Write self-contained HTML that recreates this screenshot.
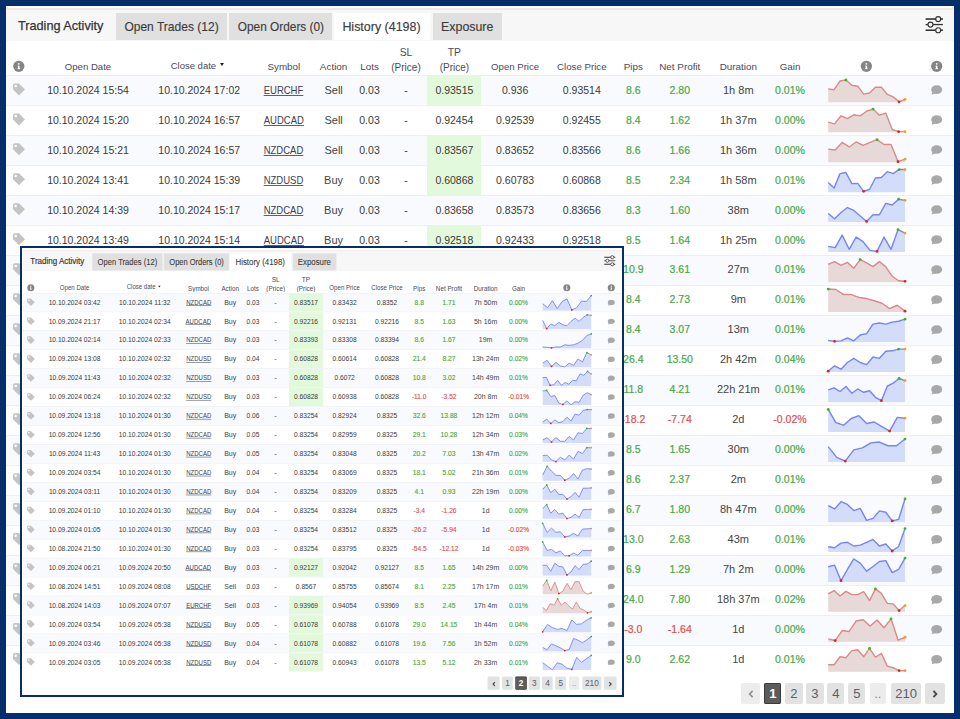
<!DOCTYPE html>
<html><head><meta charset="utf-8"><style>
*{margin:0;padding:0}
body{width:960px;height:719px;background:#052e6b;position:relative;overflow:hidden;font-family:"Liberation Sans",sans-serif}
.ui{position:absolute;left:0;top:0;width:948px;height:707px;background:#fff;overflow:hidden}
.ui div{position:absolute;white-space:nowrap}
.d{width:140px;text-align:center;font-size:10.5px;color:#3a3a3a}
.lt{font-size:11px;color:#444}
.sym{font-size:10.8px;color:#40404f}
.su{display:inline-block;transform:scaleX(0.88);text-decoration:underline;text-decoration-color:#60606c;text-underline-offset:1.2px}
.hd{width:140px;text-align:center;font-size:9.5px;color:#4a4a5c}
.tri{display:inline-block;width:0;height:0;border-left:2.6px solid transparent;border-right:2.6px solid transparent;border-top:3.6px solid #222;margin-left:4px;vertical-align:2.5px}
.tabt{height:28px;line-height:28px}
.tab{top:6.7px;height:27.8px;line-height:27.8px;text-align:center;font-size:12.9px;color:#3c3c3c;-webkit-text-stroke:0.15px #3c3c3c}
.pg{top:676.6px;height:21px;line-height:21px;text-align:center;font-size:13px;color:#56606c;background:#e2e2e2;border-radius:2px}
.pg.dis{background:#ececec;color:#8a9099}
.pg.act{background:#5c5c5c;color:#fff;box-shadow:inset 0 0 0 1px #3a3a3a;font-weight:bold}
</style></head><body>
<div class="ui" style="left:6px;top:6px">
<div style="position:absolute;left:0;top:2px;width:948px;height:1.5px;background:#ebebeb"></div>
<div style="position:absolute;left:0;top:3.5px;width:948px;height:31.5px;background:#f7f7f7"></div>
<div class="tabt" style="left:12.3px;top:6.2px;font-size:12.9px;-webkit-text-stroke:0.25px #333;color:#333;transform:scaleX(0.983);transform-origin:0 0">Trading Activity</div>
<div class="tab" style="left:109.8px;width:111px;background:#e0e0e0"><span style="display:inline-block;transform:scaleX(0.933)">Open Trades (12)</span></div>
<div class="tab" style="left:223.3px;width:103.2px;background:#e0e0e0"><span style="display:inline-block;transform:scaleX(0.919)">Open Orders (0)</span></div>
<div class="tab" style="left:327.8px;width:96.2px;background:#ffffff"><span style="display:inline-block;transform:scaleX(0.966)">History (4198)</span></div>
<div class="tab" style="left:426.5px;width:69.3px;background:#e0e0e0"><span style="display:inline-block;transform:scaleX(0.96)">Exposure</span></div>
<svg style="position:absolute;left:0;top:0" width="948" height="40"><g stroke="#333" fill="none">
<line x1="919.6" y1="13.04" x2="936.9" y2="13.04" stroke-width="1.6"/>
<line x1="919.6" y1="18.56" x2="936.9" y2="18.56" stroke-width="1.3"/>
<line x1="919.6" y1="24.23" x2="936.9" y2="24.23" stroke-width="1.6"/>
<circle cx="932.2" cy="13.04" r="2.5" fill="#f7f7f7" stroke-width="1.2"/>
<circle cx="924.5" cy="18.56" r="2.5" fill="#f7f7f7" stroke-width="1.2"/>
<circle cx="932.2" cy="24.23" r="2.5" fill="#f7f7f7" stroke-width="1.2"/></g></svg>
<div style="left:0;top:0px;width:948px;height:707px">
<div class="hd" style="left:12px;top:53.2px;height:16px;line-height:16px;font-size:9.6px;">Open Date</div>
<div class="hd" style="left:207.8px;top:53.2px;height:16px;line-height:16px;font-size:9.84px;">Symbol</div>
<div class="hd" style="left:257.6px;top:53.2px;height:16px;line-height:16px;font-size:9.9px;">Action</div>
<div class="hd" style="left:293.5px;top:53.2px;height:16px;line-height:16px;font-size:9.9px;">Lots</div>
<div class="hd" style="left:439.1px;top:53.2px;height:16px;line-height:16px;font-size:9.6px;">Open Price</div>
<div class="hd" style="left:505.8px;top:53.2px;height:16px;line-height:16px;font-size:9.7px;">Close Price</div>
<div class="hd" style="left:557.3px;top:53.2px;height:16px;line-height:16px;font-size:9.9px;">Pips</div>
<div class="hd" style="left:603.8px;top:53.2px;height:16px;line-height:16px;font-size:9.9px;">Net Profit</div>
<div class="hd" style="left:662.3px;top:53.2px;height:16px;line-height:16px;font-size:9.9px;">Duration</div>
<div class="hd" style="left:714px;top:53.2px;height:16px;line-height:16px;font-size:9.8px;">Gain</div>
<div class="hd" style="left:121.4px;top:51.5px;height:16px;line-height:16px;font-size:9.5px;">Close date<span class="tri"></span></div>
<div class="hd" style="left:330px;top:39.3px;height:16px;line-height:16px;font-size:10.3px;">SL</div>
<div class="hd" style="left:330px;top:53.9px;height:16px;line-height:16px;font-size:10px;">(Price)</div>
<div class="hd" style="left:378.4px;top:39.3px;height:16px;line-height:16px;font-size:10.3px;">TP</div>
<div class="hd" style="left:378.4px;top:53.9px;height:16px;line-height:16px;font-size:10px;">(Price)</div>
<div style="position:absolute;left:0;top:69px;width:948px;height:29.98px;background:#f9fafd;border-top:1px solid #edf0f3;box-sizing:border-box"></div>
<div style="position:absolute;left:421px;width:54px;top:69.8px;height:29.18px;background:#e3f9db"></div>
<div class="d" style="left:12px;top:69.6px;height:28.98px;line-height:28.98px;font-size:10.5px;">10.10.2024 15:54</div>
<div class="d" style="left:123.2px;top:69.6px;height:28.98px;line-height:28.98px;font-size:10.5px;">10.10.2024 17:02</div>
<div class="d sym" style="left:207.8px;top:69.6px;height:28.98px;line-height:28.98px;font-size:10.8px;"><span class="su">EURCHF</span></div>
<div class="d lt" style="left:257.6px;top:69.6px;height:28.98px;line-height:28.98px;font-size:11px;">Sell</div>
<div class="d" style="left:293.5px;top:69.6px;height:28.98px;line-height:28.98px;font-size:10.5px;">0.03</div>
<div class="d" style="left:330px;top:69.6px;height:28.98px;line-height:28.98px;font-size:10.5px;">-</div>
<div class="d" style="left:378.4px;top:69.6px;height:28.98px;line-height:28.98px;font-size:10.5px;">0.93515</div>
<div class="d" style="left:439.1px;top:69.6px;height:28.98px;line-height:28.98px;font-size:10.5px;">0.936</div>
<div class="d" style="left:505.8px;top:69.6px;height:28.98px;line-height:28.98px;font-size:10.5px;">0.93514</div>
<div class="d" style="left:557.3px;top:69.6px;height:28.98px;line-height:28.98px;font-size:10.5px;color:#47a947;-webkit-text-stroke:0.2px #47a947">8.6</div>
<div class="d" style="left:603.8px;top:69.6px;height:28.98px;line-height:28.98px;font-size:10.5px;color:#47a947;-webkit-text-stroke:0.2px #47a947">2.80</div>
<div class="d lt" style="left:662.3px;top:69.6px;height:28.98px;line-height:28.98px;font-size:11px;">1h 8m</div>
<div class="d" style="left:714px;top:69.6px;height:28.98px;line-height:28.98px;font-size:10.5px;color:#47a947;-webkit-text-stroke:0.2px #47a947">0.01%</div>
<div style="position:absolute;left:0;top:98.98px;width:948px;height:29.98px;background:#ffffff;border-top:1px solid #edf0f3;box-sizing:border-box"></div>
<div class="d" style="left:12px;top:99.58px;height:28.98px;line-height:28.98px;font-size:10.5px;">10.10.2024 15:20</div>
<div class="d" style="left:123.2px;top:99.58px;height:28.98px;line-height:28.98px;font-size:10.5px;">10.10.2024 16:57</div>
<div class="d sym" style="left:207.8px;top:99.58px;height:28.98px;line-height:28.98px;font-size:10.8px;"><span class="su">AUDCAD</span></div>
<div class="d lt" style="left:257.6px;top:99.58px;height:28.98px;line-height:28.98px;font-size:11px;">Sell</div>
<div class="d" style="left:293.5px;top:99.58px;height:28.98px;line-height:28.98px;font-size:10.5px;">0.03</div>
<div class="d" style="left:330px;top:99.58px;height:28.98px;line-height:28.98px;font-size:10.5px;">-</div>
<div class="d" style="left:378.4px;top:99.58px;height:28.98px;line-height:28.98px;font-size:10.5px;">0.92454</div>
<div class="d" style="left:439.1px;top:99.58px;height:28.98px;line-height:28.98px;font-size:10.5px;">0.92539</div>
<div class="d" style="left:505.8px;top:99.58px;height:28.98px;line-height:28.98px;font-size:10.5px;">0.92455</div>
<div class="d" style="left:557.3px;top:99.58px;height:28.98px;line-height:28.98px;font-size:10.5px;color:#47a947;-webkit-text-stroke:0.2px #47a947">8.4</div>
<div class="d" style="left:603.8px;top:99.58px;height:28.98px;line-height:28.98px;font-size:10.5px;color:#47a947;-webkit-text-stroke:0.2px #47a947">1.62</div>
<div class="d lt" style="left:662.3px;top:99.58px;height:28.98px;line-height:28.98px;font-size:11px;">1h 37m</div>
<div class="d" style="left:714px;top:99.58px;height:28.98px;line-height:28.98px;font-size:10.5px;color:#47a947;-webkit-text-stroke:0.2px #47a947">0.00%</div>
<div style="position:absolute;left:0;top:128.96px;width:948px;height:29.98px;background:#f9fafd;border-top:1px solid #edf0f3;box-sizing:border-box"></div>
<div style="position:absolute;left:421px;width:54px;top:129.76px;height:29.18px;background:#e3f9db"></div>
<div class="d" style="left:12px;top:129.56px;height:28.98px;line-height:28.98px;font-size:10.5px;">10.10.2024 15:21</div>
<div class="d" style="left:123.2px;top:129.56px;height:28.98px;line-height:28.98px;font-size:10.5px;">10.10.2024 16:57</div>
<div class="d sym" style="left:207.8px;top:129.56px;height:28.98px;line-height:28.98px;font-size:10.8px;"><span class="su">NZDCAD</span></div>
<div class="d lt" style="left:257.6px;top:129.56px;height:28.98px;line-height:28.98px;font-size:11px;">Sell</div>
<div class="d" style="left:293.5px;top:129.56px;height:28.98px;line-height:28.98px;font-size:10.5px;">0.03</div>
<div class="d" style="left:330px;top:129.56px;height:28.98px;line-height:28.98px;font-size:10.5px;">-</div>
<div class="d" style="left:378.4px;top:129.56px;height:28.98px;line-height:28.98px;font-size:10.5px;">0.83567</div>
<div class="d" style="left:439.1px;top:129.56px;height:28.98px;line-height:28.98px;font-size:10.5px;">0.83652</div>
<div class="d" style="left:505.8px;top:129.56px;height:28.98px;line-height:28.98px;font-size:10.5px;">0.83566</div>
<div class="d" style="left:557.3px;top:129.56px;height:28.98px;line-height:28.98px;font-size:10.5px;color:#47a947;-webkit-text-stroke:0.2px #47a947">8.6</div>
<div class="d" style="left:603.8px;top:129.56px;height:28.98px;line-height:28.98px;font-size:10.5px;color:#47a947;-webkit-text-stroke:0.2px #47a947">1.66</div>
<div class="d lt" style="left:662.3px;top:129.56px;height:28.98px;line-height:28.98px;font-size:11px;">1h 36m</div>
<div class="d" style="left:714px;top:129.56px;height:28.98px;line-height:28.98px;font-size:10.5px;color:#47a947;-webkit-text-stroke:0.2px #47a947">0.00%</div>
<div style="position:absolute;left:0;top:158.94px;width:948px;height:29.98px;background:#ffffff;border-top:1px solid #edf0f3;box-sizing:border-box"></div>
<div style="position:absolute;left:421px;width:54px;top:159.74px;height:29.18px;background:#e3f9db"></div>
<div class="d" style="left:12px;top:159.54px;height:28.98px;line-height:28.98px;font-size:10.5px;">10.10.2024 13:41</div>
<div class="d" style="left:123.2px;top:159.54px;height:28.98px;line-height:28.98px;font-size:10.5px;">10.10.2024 15:39</div>
<div class="d sym" style="left:207.8px;top:159.54px;height:28.98px;line-height:28.98px;font-size:10.8px;"><span class="su">NZDUSD</span></div>
<div class="d lt" style="left:257.6px;top:159.54px;height:28.98px;line-height:28.98px;font-size:11px;">Buy</div>
<div class="d" style="left:293.5px;top:159.54px;height:28.98px;line-height:28.98px;font-size:10.5px;">0.03</div>
<div class="d" style="left:330px;top:159.54px;height:28.98px;line-height:28.98px;font-size:10.5px;">-</div>
<div class="d" style="left:378.4px;top:159.54px;height:28.98px;line-height:28.98px;font-size:10.5px;">0.60868</div>
<div class="d" style="left:439.1px;top:159.54px;height:28.98px;line-height:28.98px;font-size:10.5px;">0.60783</div>
<div class="d" style="left:505.8px;top:159.54px;height:28.98px;line-height:28.98px;font-size:10.5px;">0.60868</div>
<div class="d" style="left:557.3px;top:159.54px;height:28.98px;line-height:28.98px;font-size:10.5px;color:#47a947;-webkit-text-stroke:0.2px #47a947">8.5</div>
<div class="d" style="left:603.8px;top:159.54px;height:28.98px;line-height:28.98px;font-size:10.5px;color:#47a947;-webkit-text-stroke:0.2px #47a947">2.34</div>
<div class="d lt" style="left:662.3px;top:159.54px;height:28.98px;line-height:28.98px;font-size:11px;">1h 58m</div>
<div class="d" style="left:714px;top:159.54px;height:28.98px;line-height:28.98px;font-size:10.5px;color:#47a947;-webkit-text-stroke:0.2px #47a947">0.01%</div>
<div style="position:absolute;left:0;top:188.92px;width:948px;height:29.98px;background:#f9fafd;border-top:1px solid #edf0f3;box-sizing:border-box"></div>
<div class="d" style="left:12px;top:189.52px;height:28.98px;line-height:28.98px;font-size:10.5px;">10.10.2024 14:39</div>
<div class="d" style="left:123.2px;top:189.52px;height:28.98px;line-height:28.98px;font-size:10.5px;">10.10.2024 15:17</div>
<div class="d sym" style="left:207.8px;top:189.52px;height:28.98px;line-height:28.98px;font-size:10.8px;"><span class="su">NZDCAD</span></div>
<div class="d lt" style="left:257.6px;top:189.52px;height:28.98px;line-height:28.98px;font-size:11px;">Buy</div>
<div class="d" style="left:293.5px;top:189.52px;height:28.98px;line-height:28.98px;font-size:10.5px;">0.03</div>
<div class="d" style="left:330px;top:189.52px;height:28.98px;line-height:28.98px;font-size:10.5px;">-</div>
<div class="d" style="left:378.4px;top:189.52px;height:28.98px;line-height:28.98px;font-size:10.5px;">0.83658</div>
<div class="d" style="left:439.1px;top:189.52px;height:28.98px;line-height:28.98px;font-size:10.5px;">0.83573</div>
<div class="d" style="left:505.8px;top:189.52px;height:28.98px;line-height:28.98px;font-size:10.5px;">0.83656</div>
<div class="d" style="left:557.3px;top:189.52px;height:28.98px;line-height:28.98px;font-size:10.5px;color:#47a947;-webkit-text-stroke:0.2px #47a947">8.3</div>
<div class="d" style="left:603.8px;top:189.52px;height:28.98px;line-height:28.98px;font-size:10.5px;color:#47a947;-webkit-text-stroke:0.2px #47a947">1.60</div>
<div class="d lt" style="left:662.3px;top:189.52px;height:28.98px;line-height:28.98px;font-size:11px;">38m</div>
<div class="d" style="left:714px;top:189.52px;height:28.98px;line-height:28.98px;font-size:10.5px;color:#47a947;-webkit-text-stroke:0.2px #47a947">0.00%</div>
<div style="position:absolute;left:0;top:218.9px;width:948px;height:29.98px;background:#ffffff;border-top:1px solid #edf0f3;box-sizing:border-box"></div>
<div style="position:absolute;left:421px;width:54px;top:219.7px;height:29.18px;background:#e3f9db"></div>
<div class="d" style="left:12px;top:219.5px;height:28.98px;line-height:28.98px;font-size:10.5px;">10.10.2024 13:49</div>
<div class="d" style="left:123.2px;top:219.5px;height:28.98px;line-height:28.98px;font-size:10.5px;">10.10.2024 15:14</div>
<div class="d sym" style="left:207.8px;top:219.5px;height:28.98px;line-height:28.98px;font-size:10.8px;"><span class="su">AUDCAD</span></div>
<div class="d lt" style="left:257.6px;top:219.5px;height:28.98px;line-height:28.98px;font-size:11px;">Buy</div>
<div class="d" style="left:293.5px;top:219.5px;height:28.98px;line-height:28.98px;font-size:10.5px;">0.03</div>
<div class="d" style="left:330px;top:219.5px;height:28.98px;line-height:28.98px;font-size:10.5px;">-</div>
<div class="d" style="left:378.4px;top:219.5px;height:28.98px;line-height:28.98px;font-size:10.5px;">0.92518</div>
<div class="d" style="left:439.1px;top:219.5px;height:28.98px;line-height:28.98px;font-size:10.5px;">0.92433</div>
<div class="d" style="left:505.8px;top:219.5px;height:28.98px;line-height:28.98px;font-size:10.5px;">0.92518</div>
<div class="d" style="left:557.3px;top:219.5px;height:28.98px;line-height:28.98px;font-size:10.5px;color:#47a947;-webkit-text-stroke:0.2px #47a947">8.5</div>
<div class="d" style="left:603.8px;top:219.5px;height:28.98px;line-height:28.98px;font-size:10.5px;color:#47a947;-webkit-text-stroke:0.2px #47a947">1.64</div>
<div class="d lt" style="left:662.3px;top:219.5px;height:28.98px;line-height:28.98px;font-size:11px;">1h 25m</div>
<div class="d" style="left:714px;top:219.5px;height:28.98px;line-height:28.98px;font-size:10.5px;color:#47a947;-webkit-text-stroke:0.2px #47a947">0.00%</div>
<div style="position:absolute;left:0;top:248.88px;width:948px;height:29.98px;background:#f9fafd;border-top:1px solid #edf0f3;box-sizing:border-box"></div>
<div style="position:absolute;left:421px;width:54px;top:249.68px;height:29.18px;background:#e3f9db"></div>
<div class="d" style="left:12px;top:249.48px;height:28.98px;line-height:28.98px;font-size:10.5px;">10.10.2024 13:00</div>
<div class="d" style="left:123.2px;top:249.48px;height:28.98px;line-height:28.98px;font-size:10.5px;">10.10.2024 14:59</div>
<div class="d sym" style="left:207.8px;top:249.48px;height:28.98px;line-height:28.98px;font-size:10.8px;"><span class="su">EURCHF</span></div>
<div class="d lt" style="left:257.6px;top:249.48px;height:28.98px;line-height:28.98px;font-size:11px;">Sell</div>
<div class="d" style="left:293.5px;top:249.48px;height:28.98px;line-height:28.98px;font-size:10.5px;">0.03</div>
<div class="d" style="left:330px;top:249.48px;height:28.98px;line-height:28.98px;font-size:10.5px;">-</div>
<div class="d" style="left:378.4px;top:249.48px;height:28.98px;line-height:28.98px;font-size:10.5px;">0.93500</div>
<div class="d" style="left:439.1px;top:249.48px;height:28.98px;line-height:28.98px;font-size:10.5px;">0.936</div>
<div class="d" style="left:505.8px;top:249.48px;height:28.98px;line-height:28.98px;font-size:10.5px;">0.93500</div>
<div class="d" style="left:557.3px;top:249.48px;height:28.98px;line-height:28.98px;font-size:10.5px;color:#47a947;-webkit-text-stroke:0.2px #47a947">10.9</div>
<div class="d" style="left:603.8px;top:249.48px;height:28.98px;line-height:28.98px;font-size:10.5px;color:#47a947;-webkit-text-stroke:0.2px #47a947">3.61</div>
<div class="d lt" style="left:662.3px;top:249.48px;height:28.98px;line-height:28.98px;font-size:11px;">27m</div>
<div class="d" style="left:714px;top:249.48px;height:28.98px;line-height:28.98px;font-size:10.5px;color:#47a947;-webkit-text-stroke:0.2px #47a947">0.01%</div>
<div style="position:absolute;left:0;top:278.86px;width:948px;height:29.98px;background:#ffffff;border-top:1px solid #edf0f3;box-sizing:border-box"></div>
<div style="position:absolute;left:421px;width:54px;top:279.66px;height:29.18px;background:#e3f9db"></div>
<div class="d" style="left:12px;top:279.46px;height:28.98px;line-height:28.98px;font-size:10.5px;">10.10.2024 14:00</div>
<div class="d" style="left:123.2px;top:279.46px;height:28.98px;line-height:28.98px;font-size:10.5px;">10.10.2024 14:20</div>
<div class="d sym" style="left:207.8px;top:279.46px;height:28.98px;line-height:28.98px;font-size:10.8px;"><span class="su">AUDCAD</span></div>
<div class="d lt" style="left:257.6px;top:279.46px;height:28.98px;line-height:28.98px;font-size:11px;">Sell</div>
<div class="d" style="left:293.5px;top:279.46px;height:28.98px;line-height:28.98px;font-size:10.5px;">0.03</div>
<div class="d" style="left:330px;top:279.46px;height:28.98px;line-height:28.98px;font-size:10.5px;">-</div>
<div class="d" style="left:378.4px;top:279.46px;height:28.98px;line-height:28.98px;font-size:10.5px;">0.92400</div>
<div class="d" style="left:439.1px;top:279.46px;height:28.98px;line-height:28.98px;font-size:10.5px;">0.92484</div>
<div class="d" style="left:505.8px;top:279.46px;height:28.98px;line-height:28.98px;font-size:10.5px;">0.92400</div>
<div class="d" style="left:557.3px;top:279.46px;height:28.98px;line-height:28.98px;font-size:10.5px;color:#47a947;-webkit-text-stroke:0.2px #47a947">8.4</div>
<div class="d" style="left:603.8px;top:279.46px;height:28.98px;line-height:28.98px;font-size:10.5px;color:#47a947;-webkit-text-stroke:0.2px #47a947">2.73</div>
<div class="d lt" style="left:662.3px;top:279.46px;height:28.98px;line-height:28.98px;font-size:11px;">9m</div>
<div class="d" style="left:714px;top:279.46px;height:28.98px;line-height:28.98px;font-size:10.5px;color:#47a947;-webkit-text-stroke:0.2px #47a947">0.01%</div>
<div style="position:absolute;left:0;top:308.84px;width:948px;height:29.98px;background:#f9fafd;border-top:1px solid #edf0f3;box-sizing:border-box"></div>
<div style="position:absolute;left:421px;width:54px;top:309.64px;height:29.18px;background:#e3f9db"></div>
<div class="d" style="left:12px;top:309.44px;height:28.98px;line-height:28.98px;font-size:10.5px;">10.10.2024 13:30</div>
<div class="d" style="left:123.2px;top:309.44px;height:28.98px;line-height:28.98px;font-size:10.5px;">10.10.2024 13:43</div>
<div class="d sym" style="left:207.8px;top:309.44px;height:28.98px;line-height:28.98px;font-size:10.8px;"><span class="su">NZDCAD</span></div>
<div class="d lt" style="left:257.6px;top:309.44px;height:28.98px;line-height:28.98px;font-size:11px;">Buy</div>
<div class="d" style="left:293.5px;top:309.44px;height:28.98px;line-height:28.98px;font-size:10.5px;">0.03</div>
<div class="d" style="left:330px;top:309.44px;height:28.98px;line-height:28.98px;font-size:10.5px;">-</div>
<div class="d" style="left:378.4px;top:309.44px;height:28.98px;line-height:28.98px;font-size:10.5px;">0.83600</div>
<div class="d" style="left:439.1px;top:309.44px;height:28.98px;line-height:28.98px;font-size:10.5px;">0.83516</div>
<div class="d" style="left:505.8px;top:309.44px;height:28.98px;line-height:28.98px;font-size:10.5px;">0.83600</div>
<div class="d" style="left:557.3px;top:309.44px;height:28.98px;line-height:28.98px;font-size:10.5px;color:#47a947;-webkit-text-stroke:0.2px #47a947">8.4</div>
<div class="d" style="left:603.8px;top:309.44px;height:28.98px;line-height:28.98px;font-size:10.5px;color:#47a947;-webkit-text-stroke:0.2px #47a947">3.07</div>
<div class="d lt" style="left:662.3px;top:309.44px;height:28.98px;line-height:28.98px;font-size:11px;">13m</div>
<div class="d" style="left:714px;top:309.44px;height:28.98px;line-height:28.98px;font-size:10.5px;color:#47a947;-webkit-text-stroke:0.2px #47a947">0.01%</div>
<div style="position:absolute;left:0;top:338.82px;width:948px;height:29.98px;background:#ffffff;border-top:1px solid #edf0f3;box-sizing:border-box"></div>
<div style="position:absolute;left:421px;width:54px;top:339.62px;height:29.18px;background:#e3f9db"></div>
<div class="d" style="left:12px;top:339.42px;height:28.98px;line-height:28.98px;font-size:10.5px;">10.10.2024 10:00</div>
<div class="d" style="left:123.2px;top:339.42px;height:28.98px;line-height:28.98px;font-size:10.5px;">10.10.2024 12:42</div>
<div class="d sym" style="left:207.8px;top:339.42px;height:28.98px;line-height:28.98px;font-size:10.8px;"><span class="su">NZDUSD</span></div>
<div class="d lt" style="left:257.6px;top:339.42px;height:28.98px;line-height:28.98px;font-size:11px;">Buy</div>
<div class="d" style="left:293.5px;top:339.42px;height:28.98px;line-height:28.98px;font-size:10.5px;">0.06</div>
<div class="d" style="left:330px;top:339.42px;height:28.98px;line-height:28.98px;font-size:10.5px;">-</div>
<div class="d" style="left:378.4px;top:339.42px;height:28.98px;line-height:28.98px;font-size:10.5px;">0.60900</div>
<div class="d" style="left:439.1px;top:339.42px;height:28.98px;line-height:28.98px;font-size:10.5px;">0.60636</div>
<div class="d" style="left:505.8px;top:339.42px;height:28.98px;line-height:28.98px;font-size:10.5px;">0.60900</div>
<div class="d" style="left:557.3px;top:339.42px;height:28.98px;line-height:28.98px;font-size:10.5px;color:#47a947;-webkit-text-stroke:0.2px #47a947">26.4</div>
<div class="d" style="left:603.8px;top:339.42px;height:28.98px;line-height:28.98px;font-size:10.5px;color:#47a947;-webkit-text-stroke:0.2px #47a947">13.50</div>
<div class="d lt" style="left:662.3px;top:339.42px;height:28.98px;line-height:28.98px;font-size:11px;">2h 42m</div>
<div class="d" style="left:714px;top:339.42px;height:28.98px;line-height:28.98px;font-size:10.5px;color:#47a947;-webkit-text-stroke:0.2px #47a947">0.04%</div>
<div style="position:absolute;left:0;top:368.8px;width:948px;height:29.98px;background:#f9fafd;border-top:1px solid #edf0f3;box-sizing:border-box"></div>
<div style="position:absolute;left:421px;width:54px;top:369.6px;height:29.18px;background:#e3f9db"></div>
<div class="d" style="left:12px;top:369.4px;height:28.98px;line-height:28.98px;font-size:10.5px;">10.09.2024 14:00</div>
<div class="d" style="left:123.2px;top:369.4px;height:28.98px;line-height:28.98px;font-size:10.5px;">10.10.2024 12:21</div>
<div class="d sym" style="left:207.8px;top:369.4px;height:28.98px;line-height:28.98px;font-size:10.8px;"><span class="su">NZDCAD</span></div>
<div class="d lt" style="left:257.6px;top:369.4px;height:28.98px;line-height:28.98px;font-size:11px;">Buy</div>
<div class="d" style="left:293.5px;top:369.4px;height:28.98px;line-height:28.98px;font-size:10.5px;">0.04</div>
<div class="d" style="left:330px;top:369.4px;height:28.98px;line-height:28.98px;font-size:10.5px;">-</div>
<div class="d" style="left:378.4px;top:369.4px;height:28.98px;line-height:28.98px;font-size:10.5px;">0.83500</div>
<div class="d" style="left:439.1px;top:369.4px;height:28.98px;line-height:28.98px;font-size:10.5px;">0.83382</div>
<div class="d" style="left:505.8px;top:369.4px;height:28.98px;line-height:28.98px;font-size:10.5px;">0.83500</div>
<div class="d" style="left:557.3px;top:369.4px;height:28.98px;line-height:28.98px;font-size:10.5px;color:#47a947;-webkit-text-stroke:0.2px #47a947">11.8</div>
<div class="d" style="left:603.8px;top:369.4px;height:28.98px;line-height:28.98px;font-size:10.5px;color:#47a947;-webkit-text-stroke:0.2px #47a947">4.21</div>
<div class="d lt" style="left:662.3px;top:369.4px;height:28.98px;line-height:28.98px;font-size:11px;">22h 21m</div>
<div class="d" style="left:714px;top:369.4px;height:28.98px;line-height:28.98px;font-size:10.5px;color:#47a947;-webkit-text-stroke:0.2px #47a947">0.01%</div>
<div style="position:absolute;left:0;top:398.78px;width:948px;height:29.98px;background:#ffffff;border-top:1px solid #edf0f3;box-sizing:border-box"></div>
<div class="d" style="left:12px;top:399.38px;height:28.98px;line-height:28.98px;font-size:10.5px;">10.08.2024 10:00</div>
<div class="d" style="left:123.2px;top:399.38px;height:28.98px;line-height:28.98px;font-size:10.5px;">10.10.2024 12:00</div>
<div class="d sym" style="left:207.8px;top:399.38px;height:28.98px;line-height:28.98px;font-size:10.8px;"><span class="su">NZDCAD</span></div>
<div class="d lt" style="left:257.6px;top:399.38px;height:28.98px;line-height:28.98px;font-size:11px;">Buy</div>
<div class="d" style="left:293.5px;top:399.38px;height:28.98px;line-height:28.98px;font-size:10.5px;">0.03</div>
<div class="d" style="left:330px;top:399.38px;height:28.98px;line-height:28.98px;font-size:10.5px;">-</div>
<div class="d" style="left:378.4px;top:399.38px;height:28.98px;line-height:28.98px;font-size:10.5px;">0.83500</div>
<div class="d" style="left:439.1px;top:399.38px;height:28.98px;line-height:28.98px;font-size:10.5px;">0.83682</div>
<div class="d" style="left:505.8px;top:399.38px;height:28.98px;line-height:28.98px;font-size:10.5px;">0.83500</div>
<div class="d" style="left:557.3px;top:399.38px;height:28.98px;line-height:28.98px;font-size:10.5px;color:#e0504a;-webkit-text-stroke:0.2px #e0504a">-18.2</div>
<div class="d" style="left:603.8px;top:399.38px;height:28.98px;line-height:28.98px;font-size:10.5px;color:#e0504a;-webkit-text-stroke:0.2px #e0504a">-7.74</div>
<div class="d lt" style="left:662.3px;top:399.38px;height:28.98px;line-height:28.98px;font-size:11px;">2d</div>
<div class="d" style="left:714px;top:399.38px;height:28.98px;line-height:28.98px;font-size:10.5px;color:#e0504a;-webkit-text-stroke:0.2px #e0504a">-0.02%</div>
<div style="position:absolute;left:0;top:428.76px;width:948px;height:29.98px;background:#f9fafd;border-top:1px solid #edf0f3;box-sizing:border-box"></div>
<div style="position:absolute;left:421px;width:54px;top:429.56px;height:29.18px;background:#e3f9db"></div>
<div class="d" style="left:12px;top:429.36px;height:28.98px;line-height:28.98px;font-size:10.5px;">10.10.2024 11:00</div>
<div class="d" style="left:123.2px;top:429.36px;height:28.98px;line-height:28.98px;font-size:10.5px;">10.10.2024 11:30</div>
<div class="d sym" style="left:207.8px;top:429.36px;height:28.98px;line-height:28.98px;font-size:10.8px;"><span class="su">NZDUSD</span></div>
<div class="d lt" style="left:257.6px;top:429.36px;height:28.98px;line-height:28.98px;font-size:11px;">Buy</div>
<div class="d" style="left:293.5px;top:429.36px;height:28.98px;line-height:28.98px;font-size:10.5px;">0.03</div>
<div class="d" style="left:330px;top:429.36px;height:28.98px;line-height:28.98px;font-size:10.5px;">-</div>
<div class="d" style="left:378.4px;top:429.36px;height:28.98px;line-height:28.98px;font-size:10.5px;">0.60800</div>
<div class="d" style="left:439.1px;top:429.36px;height:28.98px;line-height:28.98px;font-size:10.5px;">0.60715</div>
<div class="d" style="left:505.8px;top:429.36px;height:28.98px;line-height:28.98px;font-size:10.5px;">0.60800</div>
<div class="d" style="left:557.3px;top:429.36px;height:28.98px;line-height:28.98px;font-size:10.5px;color:#47a947;-webkit-text-stroke:0.2px #47a947">8.5</div>
<div class="d" style="left:603.8px;top:429.36px;height:28.98px;line-height:28.98px;font-size:10.5px;color:#47a947;-webkit-text-stroke:0.2px #47a947">1.65</div>
<div class="d lt" style="left:662.3px;top:429.36px;height:28.98px;line-height:28.98px;font-size:11px;">30m</div>
<div class="d" style="left:714px;top:429.36px;height:28.98px;line-height:28.98px;font-size:10.5px;color:#47a947;-webkit-text-stroke:0.2px #47a947">0.00%</div>
<div style="position:absolute;left:0;top:458.74px;width:948px;height:29.98px;background:#ffffff;border-top:1px solid #edf0f3;box-sizing:border-box"></div>
<div style="position:absolute;left:421px;width:54px;top:459.54px;height:29.18px;background:#e3f9db"></div>
<div class="d" style="left:12px;top:459.34px;height:28.98px;line-height:28.98px;font-size:10.5px;">10.10.2024 11:00</div>
<div class="d" style="left:123.2px;top:459.34px;height:28.98px;line-height:28.98px;font-size:10.5px;">10.10.2024 11:02</div>
<div class="d sym" style="left:207.8px;top:459.34px;height:28.98px;line-height:28.98px;font-size:10.8px;"><span class="su">AUDCAD</span></div>
<div class="d lt" style="left:257.6px;top:459.34px;height:28.98px;line-height:28.98px;font-size:11px;">Buy</div>
<div class="d" style="left:293.5px;top:459.34px;height:28.98px;line-height:28.98px;font-size:10.5px;">0.03</div>
<div class="d" style="left:330px;top:459.34px;height:28.98px;line-height:28.98px;font-size:10.5px;">-</div>
<div class="d" style="left:378.4px;top:459.34px;height:28.98px;line-height:28.98px;font-size:10.5px;">0.92500</div>
<div class="d" style="left:439.1px;top:459.34px;height:28.98px;line-height:28.98px;font-size:10.5px;">0.92414</div>
<div class="d" style="left:505.8px;top:459.34px;height:28.98px;line-height:28.98px;font-size:10.5px;">0.92500</div>
<div class="d" style="left:557.3px;top:459.34px;height:28.98px;line-height:28.98px;font-size:10.5px;color:#47a947;-webkit-text-stroke:0.2px #47a947">8.6</div>
<div class="d" style="left:603.8px;top:459.34px;height:28.98px;line-height:28.98px;font-size:10.5px;color:#47a947;-webkit-text-stroke:0.2px #47a947">2.37</div>
<div class="d lt" style="left:662.3px;top:459.34px;height:28.98px;line-height:28.98px;font-size:11px;">2m</div>
<div class="d" style="left:714px;top:459.34px;height:28.98px;line-height:28.98px;font-size:10.5px;color:#47a947;-webkit-text-stroke:0.2px #47a947">0.01%</div>
<div style="position:absolute;left:0;top:488.72px;width:948px;height:29.98px;background:#f9fafd;border-top:1px solid #edf0f3;box-sizing:border-box"></div>
<div style="position:absolute;left:421px;width:54px;top:489.52px;height:29.18px;background:#e3f9db"></div>
<div class="d" style="left:12px;top:489.32px;height:28.98px;line-height:28.98px;font-size:10.5px;">10.10.2024 02:00</div>
<div class="d" style="left:123.2px;top:489.32px;height:28.98px;line-height:28.98px;font-size:10.5px;">10.10.2024 10:47</div>
<div class="d sym" style="left:207.8px;top:489.32px;height:28.98px;line-height:28.98px;font-size:10.8px;"><span class="su">NZDUSD</span></div>
<div class="d lt" style="left:257.6px;top:489.32px;height:28.98px;line-height:28.98px;font-size:11px;">Buy</div>
<div class="d" style="left:293.5px;top:489.32px;height:28.98px;line-height:28.98px;font-size:10.5px;">0.04</div>
<div class="d" style="left:330px;top:489.32px;height:28.98px;line-height:28.98px;font-size:10.5px;">-</div>
<div class="d" style="left:378.4px;top:489.32px;height:28.98px;line-height:28.98px;font-size:10.5px;">0.60700</div>
<div class="d" style="left:439.1px;top:489.32px;height:28.98px;line-height:28.98px;font-size:10.5px;">0.60633</div>
<div class="d" style="left:505.8px;top:489.32px;height:28.98px;line-height:28.98px;font-size:10.5px;">0.60700</div>
<div class="d" style="left:557.3px;top:489.32px;height:28.98px;line-height:28.98px;font-size:10.5px;color:#47a947;-webkit-text-stroke:0.2px #47a947">6.7</div>
<div class="d" style="left:603.8px;top:489.32px;height:28.98px;line-height:28.98px;font-size:10.5px;color:#47a947;-webkit-text-stroke:0.2px #47a947">1.80</div>
<div class="d lt" style="left:662.3px;top:489.32px;height:28.98px;line-height:28.98px;font-size:11px;">8h 47m</div>
<div class="d" style="left:714px;top:489.32px;height:28.98px;line-height:28.98px;font-size:10.5px;color:#47a947;-webkit-text-stroke:0.2px #47a947">0.00%</div>
<div style="position:absolute;left:0;top:518.7px;width:948px;height:29.98px;background:#ffffff;border-top:1px solid #edf0f3;box-sizing:border-box"></div>
<div style="position:absolute;left:421px;width:54px;top:519.5px;height:29.18px;background:#e3f9db"></div>
<div class="d" style="left:12px;top:519.3px;height:28.98px;line-height:28.98px;font-size:10.5px;">10.10.2024 10:00</div>
<div class="d" style="left:123.2px;top:519.3px;height:28.98px;line-height:28.98px;font-size:10.5px;">10.10.2024 10:43</div>
<div class="d sym" style="left:207.8px;top:519.3px;height:28.98px;line-height:28.98px;font-size:10.8px;"><span class="su">NZDCAD</span></div>
<div class="d lt" style="left:257.6px;top:519.3px;height:28.98px;line-height:28.98px;font-size:11px;">Buy</div>
<div class="d" style="left:293.5px;top:519.3px;height:28.98px;line-height:28.98px;font-size:10.5px;">0.03</div>
<div class="d" style="left:330px;top:519.3px;height:28.98px;line-height:28.98px;font-size:10.5px;">-</div>
<div class="d" style="left:378.4px;top:519.3px;height:28.98px;line-height:28.98px;font-size:10.5px;">0.83400</div>
<div class="d" style="left:439.1px;top:519.3px;height:28.98px;line-height:28.98px;font-size:10.5px;">0.83270</div>
<div class="d" style="left:505.8px;top:519.3px;height:28.98px;line-height:28.98px;font-size:10.5px;">0.83400</div>
<div class="d" style="left:557.3px;top:519.3px;height:28.98px;line-height:28.98px;font-size:10.5px;color:#47a947;-webkit-text-stroke:0.2px #47a947">13.0</div>
<div class="d" style="left:603.8px;top:519.3px;height:28.98px;line-height:28.98px;font-size:10.5px;color:#47a947;-webkit-text-stroke:0.2px #47a947">2.63</div>
<div class="d lt" style="left:662.3px;top:519.3px;height:28.98px;line-height:28.98px;font-size:11px;">43m</div>
<div class="d" style="left:714px;top:519.3px;height:28.98px;line-height:28.98px;font-size:10.5px;color:#47a947;-webkit-text-stroke:0.2px #47a947">0.01%</div>
<div style="position:absolute;left:0;top:548.68px;width:948px;height:29.98px;background:#f9fafd;border-top:1px solid #edf0f3;box-sizing:border-box"></div>
<div style="position:absolute;left:421px;width:54px;top:549.48px;height:29.18px;background:#e3f9db"></div>
<div class="d" style="left:12px;top:549.28px;height:28.98px;line-height:28.98px;font-size:10.5px;">10.10.2024 03:00</div>
<div class="d" style="left:123.2px;top:549.28px;height:28.98px;line-height:28.98px;font-size:10.5px;">10.10.2024 10:02</div>
<div class="d sym" style="left:207.8px;top:549.28px;height:28.98px;line-height:28.98px;font-size:10.8px;"><span class="su">NZDUSD</span></div>
<div class="d lt" style="left:257.6px;top:549.28px;height:28.98px;line-height:28.98px;font-size:11px;">Buy</div>
<div class="d" style="left:293.5px;top:549.28px;height:28.98px;line-height:28.98px;font-size:10.5px;">0.03</div>
<div class="d" style="left:330px;top:549.28px;height:28.98px;line-height:28.98px;font-size:10.5px;">-</div>
<div class="d" style="left:378.4px;top:549.28px;height:28.98px;line-height:28.98px;font-size:10.5px;">0.60700</div>
<div class="d" style="left:439.1px;top:549.28px;height:28.98px;line-height:28.98px;font-size:10.5px;">0.60631</div>
<div class="d" style="left:505.8px;top:549.28px;height:28.98px;line-height:28.98px;font-size:10.5px;">0.60700</div>
<div class="d" style="left:557.3px;top:549.28px;height:28.98px;line-height:28.98px;font-size:10.5px;color:#47a947;-webkit-text-stroke:0.2px #47a947">6.9</div>
<div class="d" style="left:603.8px;top:549.28px;height:28.98px;line-height:28.98px;font-size:10.5px;color:#47a947;-webkit-text-stroke:0.2px #47a947">1.29</div>
<div class="d lt" style="left:662.3px;top:549.28px;height:28.98px;line-height:28.98px;font-size:11px;">7h 2m</div>
<div class="d" style="left:714px;top:549.28px;height:28.98px;line-height:28.98px;font-size:10.5px;color:#47a947;-webkit-text-stroke:0.2px #47a947">0.00%</div>
<div style="position:absolute;left:0;top:578.66px;width:948px;height:29.98px;background:#ffffff;border-top:1px solid #edf0f3;box-sizing:border-box"></div>
<div style="position:absolute;left:421px;width:54px;top:579.46px;height:29.18px;background:#e3f9db"></div>
<div class="d" style="left:12px;top:579.26px;height:28.98px;line-height:28.98px;font-size:10.5px;">10.09.2024 15:00</div>
<div class="d" style="left:123.2px;top:579.26px;height:28.98px;line-height:28.98px;font-size:10.5px;">10.10.2024 09:37</div>
<div class="d sym" style="left:207.8px;top:579.26px;height:28.98px;line-height:28.98px;font-size:10.8px;"><span class="su">EURCHF</span></div>
<div class="d lt" style="left:257.6px;top:579.26px;height:28.98px;line-height:28.98px;font-size:11px;">Sell</div>
<div class="d" style="left:293.5px;top:579.26px;height:28.98px;line-height:28.98px;font-size:10.5px;">0.03</div>
<div class="d" style="left:330px;top:579.26px;height:28.98px;line-height:28.98px;font-size:10.5px;">-</div>
<div class="d" style="left:378.4px;top:579.26px;height:28.98px;line-height:28.98px;font-size:10.5px;">0.93600</div>
<div class="d" style="left:439.1px;top:579.26px;height:28.98px;line-height:28.98px;font-size:10.5px;">0.93840</div>
<div class="d" style="left:505.8px;top:579.26px;height:28.98px;line-height:28.98px;font-size:10.5px;">0.93600</div>
<div class="d" style="left:557.3px;top:579.26px;height:28.98px;line-height:28.98px;font-size:10.5px;color:#47a947;-webkit-text-stroke:0.2px #47a947">24.0</div>
<div class="d" style="left:603.8px;top:579.26px;height:28.98px;line-height:28.98px;font-size:10.5px;color:#47a947;-webkit-text-stroke:0.2px #47a947">7.80</div>
<div class="d lt" style="left:662.3px;top:579.26px;height:28.98px;line-height:28.98px;font-size:11px;">18h 37m</div>
<div class="d" style="left:714px;top:579.26px;height:28.98px;line-height:28.98px;font-size:10.5px;color:#47a947;-webkit-text-stroke:0.2px #47a947">0.02%</div>
<div style="position:absolute;left:0;top:608.64px;width:948px;height:29.98px;background:#f9fafd;border-top:1px solid #edf0f3;box-sizing:border-box"></div>
<div class="d" style="left:12px;top:609.24px;height:28.98px;line-height:28.98px;font-size:10.5px;">10.09.2024 09:00</div>
<div class="d" style="left:123.2px;top:609.24px;height:28.98px;line-height:28.98px;font-size:10.5px;">10.10.2024 09:30</div>
<div class="d sym" style="left:207.8px;top:609.24px;height:28.98px;line-height:28.98px;font-size:10.8px;"><span class="su">AUDCAD</span></div>
<div class="d lt" style="left:257.6px;top:609.24px;height:28.98px;line-height:28.98px;font-size:11px;">Sell</div>
<div class="d" style="left:293.5px;top:609.24px;height:28.98px;line-height:28.98px;font-size:10.5px;">0.03</div>
<div class="d" style="left:330px;top:609.24px;height:28.98px;line-height:28.98px;font-size:10.5px;">-</div>
<div class="d" style="left:378.4px;top:609.24px;height:28.98px;line-height:28.98px;font-size:10.5px;">0.92600</div>
<div class="d" style="left:439.1px;top:609.24px;height:28.98px;line-height:28.98px;font-size:10.5px;">0.92570</div>
<div class="d" style="left:505.8px;top:609.24px;height:28.98px;line-height:28.98px;font-size:10.5px;">0.92600</div>
<div class="d" style="left:557.3px;top:609.24px;height:28.98px;line-height:28.98px;font-size:10.5px;color:#e0504a;-webkit-text-stroke:0.2px #e0504a">-3.0</div>
<div class="d" style="left:603.8px;top:609.24px;height:28.98px;line-height:28.98px;font-size:10.5px;color:#e0504a;-webkit-text-stroke:0.2px #e0504a">-1.64</div>
<div class="d lt" style="left:662.3px;top:609.24px;height:28.98px;line-height:28.98px;font-size:11px;">1d</div>
<div class="d" style="left:714px;top:609.24px;height:28.98px;line-height:28.98px;font-size:10.5px;color:#47a947;-webkit-text-stroke:0.2px #47a947">0.00%</div>
<div style="position:absolute;left:0;top:638.62px;width:948px;height:29.98px;background:#ffffff;border-top:1px solid #edf0f3;box-sizing:border-box"></div>
<div style="position:absolute;left:421px;width:54px;top:639.42px;height:29.18px;background:#e3f9db"></div>
<div class="d" style="left:12px;top:639.22px;height:28.98px;line-height:28.98px;font-size:10.5px;">10.09.2024 09:00</div>
<div class="d" style="left:123.2px;top:639.22px;height:28.98px;line-height:28.98px;font-size:10.5px;">10.10.2024 09:20</div>
<div class="d sym" style="left:207.8px;top:639.22px;height:28.98px;line-height:28.98px;font-size:10.8px;"><span class="su">EURCHF</span></div>
<div class="d lt" style="left:257.6px;top:639.22px;height:28.98px;line-height:28.98px;font-size:11px;">Sell</div>
<div class="d" style="left:293.5px;top:639.22px;height:28.98px;line-height:28.98px;font-size:10.5px;">0.03</div>
<div class="d" style="left:330px;top:639.22px;height:28.98px;line-height:28.98px;font-size:10.5px;">-</div>
<div class="d" style="left:378.4px;top:639.22px;height:28.98px;line-height:28.98px;font-size:10.5px;">0.93500</div>
<div class="d" style="left:439.1px;top:639.22px;height:28.98px;line-height:28.98px;font-size:10.5px;">0.93590</div>
<div class="d" style="left:505.8px;top:639.22px;height:28.98px;line-height:28.98px;font-size:10.5px;">0.93500</div>
<div class="d" style="left:557.3px;top:639.22px;height:28.98px;line-height:28.98px;font-size:10.5px;color:#47a947;-webkit-text-stroke:0.2px #47a947">9.0</div>
<div class="d" style="left:603.8px;top:639.22px;height:28.98px;line-height:28.98px;font-size:10.5px;color:#47a947;-webkit-text-stroke:0.2px #47a947">2.62</div>
<div class="d lt" style="left:662.3px;top:639.22px;height:28.98px;line-height:28.98px;font-size:11px;">1d</div>
<div class="d" style="left:714px;top:639.22px;height:28.98px;line-height:28.98px;font-size:10.5px;color:#47a947;-webkit-text-stroke:0.2px #47a947">0.01%</div>
<svg style="position:absolute;left:0;top:0" width="948" height="707"><circle cx="12.8" cy="60.3" r="5.6" fill="#858585"/><rect x="12.05" y="59.7" width="1.5" height="3.2" fill="#fff"/><rect x="11.4" y="62.2" width="2.8" height="0.95" fill="#fff"/><rect x="11.5" y="59.7" width="0.8" height="0.7" fill="#fff"/><circle cx="12.8" cy="57.8" r="0.9" fill="#fff"/><circle cx="860.4" cy="60.3" r="5.6" fill="#858585"/><rect x="859.65" y="59.7" width="1.5" height="3.2" fill="#fff"/><rect x="859" y="62.2" width="2.8" height="0.95" fill="#fff"/><rect x="859.1" y="59.7" width="0.8" height="0.7" fill="#fff"/><circle cx="860.4" cy="57.8" r="0.9" fill="#fff"/><circle cx="930.7" cy="60.3" r="5.6" fill="#858585"/><rect x="929.95" y="59.7" width="1.5" height="3.2" fill="#fff"/><rect x="929.3" y="62.2" width="2.8" height="0.95" fill="#fff"/><rect x="929.4" y="59.7" width="0.8" height="0.7" fill="#fff"/><circle cx="930.7" cy="57.8" r="0.9" fill="#fff"/><g transform="translate(7,77.4)"><path d="M0 1.5 Q0 0 1.5 0 L6 0 L12 6 L6 12 L0 6 Z" fill="#c4c4c4"/><circle cx="2.7" cy="2.7" r="1.25" fill="#fff"/></g><polygon points="822.2,96.2 822.2,82.9 828.11,83.7 834.02,75 839.92,74 845.83,79.2 851.74,80.2 857.65,88.1 863.55,87 869.46,81.3 875.37,81.3 881.28,88.4 887.18,90.9 893.09,95.8 899,93.3 899,96.2" fill="#e8d9d9"/><polyline points="822.2,82.9 828.11,83.7 834.02,75 839.92,74 845.83,79.2 851.74,80.2 857.65,88.1 863.55,87 869.46,81.3 875.37,81.3 881.28,88.4 887.18,90.9 893.09,95.8 899,93.3" fill="none" stroke="#d98a8a" stroke-width="1.4" stroke-linejoin="round"/><circle cx="839.92" cy="74" r="1.4" fill="#3fb21f"/><circle cx="893.09" cy="95.8" r="1.4" fill="#e3211b"/><circle cx="899" cy="93.3" r="1.4" fill="#f29a2e"/><ellipse cx="930.7" cy="83.6" rx="5.5" ry="4.3" fill="#a8a8a8"/><path d="M926.7 85.6 L925.6 88.7 L929.7 87.4 Z" fill="#a8a8a8"/><g transform="translate(7,107.38)"><path d="M0 1.5 Q0 0 1.5 0 L6 0 L12 6 L6 12 L0 6 Z" fill="#c4c4c4"/><circle cx="2.7" cy="2.7" r="1.25" fill="#fff"/></g><polygon points="822.2,126.18 822.2,116.18 828.6,117.88 835,109.78 841.4,112.58 847.8,108.78 854.2,109.88 860.6,105.28 867,103.08 873.4,109.18 879.8,107.08 886.2,123.48 892.6,125.63 899,125.63 899,126.18" fill="#e8d9d9"/><polyline points="822.2,116.18 828.6,117.88 835,109.78 841.4,112.58 847.8,108.78 854.2,109.88 860.6,105.28 867,103.08 873.4,109.18 879.8,107.08 886.2,123.48 892.6,125.63 899,125.63" fill="none" stroke="#d98a8a" stroke-width="1.4" stroke-linejoin="round"/><circle cx="867" cy="103.08" r="1.4" fill="#3fb21f"/><circle cx="892.6" cy="125.63" r="1.4" fill="#e3211b"/><circle cx="899" cy="125.63" r="1.4" fill="#f29a2e"/><ellipse cx="930.7" cy="113.58" rx="5.5" ry="4.3" fill="#a8a8a8"/><path d="M926.7 115.58 L925.6 118.68 L929.7 117.38 Z" fill="#a8a8a8"/><g transform="translate(7,137.36)"><path d="M0 1.5 Q0 0 1.5 0 L6 0 L12 6 L6 12 L0 6 Z" fill="#c4c4c4"/><circle cx="2.7" cy="2.7" r="1.25" fill="#fff"/></g><polygon points="822.2,156.16 822.2,143.16 829.18,143.96 836.16,136.46 843.15,140.96 850.13,135.96 857.11,139.36 864.09,136.46 871.07,133.66 878.05,138.46 885.04,138.46 892.02,155.66 899,153.16 899,156.16" fill="#e8d9d9"/><polyline points="822.2,143.16 829.18,143.96 836.16,136.46 843.15,140.96 850.13,135.96 857.11,139.36 864.09,136.46 871.07,133.66 878.05,138.46 885.04,138.46 892.02,155.66 899,153.16" fill="none" stroke="#d98a8a" stroke-width="1.4" stroke-linejoin="round"/><circle cx="871.07" cy="133.66" r="1.4" fill="#3fb21f"/><circle cx="892.02" cy="155.66" r="1.4" fill="#e3211b"/><circle cx="899" cy="153.16" r="1.4" fill="#f29a2e"/><ellipse cx="930.7" cy="143.56" rx="5.5" ry="4.3" fill="#a8a8a8"/><path d="M926.7 145.56 L925.6 148.66 L929.7 147.36 Z" fill="#a8a8a8"/><g transform="translate(7,167.34)"><path d="M0 1.5 Q0 0 1.5 0 L6 0 L12 6 L6 12 L0 6 Z" fill="#c4c4c4"/><circle cx="2.7" cy="2.7" r="1.25" fill="#fff"/></g><polygon points="822.2,186.14 822.2,176.54 828.11,182.04 834.02,167.64 839.92,166.54 845.83,177.64 851.74,177.34 857.65,185.34 863.55,183.24 869.46,172.04 875.37,171.54 881.28,165.64 887.18,167.64 893.09,163.54 899,163.54 899,186.14" fill="#d3dcf8"/><polyline points="822.2,176.54 828.11,182.04 834.02,167.64 839.92,166.54 845.83,177.64 851.74,177.34 857.65,185.34 863.55,183.24 869.46,172.04 875.37,171.54 881.28,165.64 887.18,167.64 893.09,163.54 899,163.54" fill="none" stroke="#7585f2" stroke-width="1.4" stroke-linejoin="round"/><circle cx="893.09" cy="163.54" r="1.4" fill="#3fb21f"/><circle cx="857.65" cy="185.34" r="1.4" fill="#e3211b"/><circle cx="899" cy="163.54" r="1.4" fill="#f29a2e"/><ellipse cx="930.7" cy="173.54" rx="5.5" ry="4.3" fill="#a8a8a8"/><path d="M926.7 175.54 L925.6 178.64 L929.7 177.34 Z" fill="#a8a8a8"/><g transform="translate(7,197.32)"><path d="M0 1.5 Q0 0 1.5 0 L6 0 L12 6 L6 12 L0 6 Z" fill="#c4c4c4"/><circle cx="2.7" cy="2.7" r="1.25" fill="#fff"/></g><polygon points="822.2,216.12 822.2,207.42 828.6,212.72 835,206.52 841.4,201.52 847.8,204.42 854.2,209.92 860.6,215.42 867,208.72 873.4,208.72 879.8,197.32 886.2,199.02 892.6,193.22 899,194.32 899,216.12" fill="#d3dcf8"/><polyline points="822.2,207.42 828.6,212.72 835,206.52 841.4,201.52 847.8,204.42 854.2,209.92 860.6,215.42 867,208.72 873.4,208.72 879.8,197.32 886.2,199.02 892.6,193.22 899,194.32" fill="none" stroke="#7585f2" stroke-width="1.4" stroke-linejoin="round"/><circle cx="892.6" cy="193.22" r="1.4" fill="#3fb21f"/><circle cx="860.6" cy="215.42" r="1.4" fill="#e3211b"/><circle cx="899" cy="194.32" r="1.4" fill="#f29a2e"/><ellipse cx="930.7" cy="203.52" rx="5.5" ry="4.3" fill="#a8a8a8"/><path d="M926.7 205.52 L925.6 208.62 L929.7 207.32 Z" fill="#a8a8a8"/><g transform="translate(7,227.3)"><path d="M0 1.5 Q0 0 1.5 0 L6 0 L12 6 L6 12 L0 6 Z" fill="#c4c4c4"/><circle cx="2.7" cy="2.7" r="1.25" fill="#fff"/></g><polygon points="822.2,246.1 822.2,240.4 829.18,241.6 836.16,229.1 843.15,243.3 850.13,231.1 857.11,235.7 864.09,244.4 871.07,245.4 878.05,231.1 885.04,243.3 892.02,223.7 899,227.1 899,246.1" fill="#d3dcf8"/><polyline points="822.2,240.4 829.18,241.6 836.16,229.1 843.15,243.3 850.13,231.1 857.11,235.7 864.09,244.4 871.07,245.4 878.05,231.1 885.04,243.3 892.02,223.7 899,227.1" fill="none" stroke="#7585f2" stroke-width="1.4" stroke-linejoin="round"/><circle cx="892.02" cy="223.7" r="1.4" fill="#3fb21f"/><circle cx="871.07" cy="245.4" r="1.4" fill="#e3211b"/><circle cx="899" cy="227.1" r="1.4" fill="#f29a2e"/><ellipse cx="930.7" cy="233.5" rx="5.5" ry="4.3" fill="#a8a8a8"/><path d="M926.7 235.5 L925.6 238.6 L929.7 237.3 Z" fill="#a8a8a8"/><g transform="translate(7,257.28)"><path d="M0 1.5 Q0 0 1.5 0 L6 0 L12 6 L6 12 L0 6 Z" fill="#c4c4c4"/><circle cx="2.7" cy="2.7" r="1.25" fill="#fff"/></g><polygon points="822.2,276.08 822.2,258.38 828.6,255.58 835,259.28 841.4,256.38 847.8,262.28 854.2,253.58 860.6,256.88 867,260.58 873.4,255.58 879.8,260.88 886.2,270.28 892.6,274.78 899,275.28 899,276.08" fill="#e8d9d9"/><polyline points="822.2,258.38 828.6,255.58 835,259.28 841.4,256.38 847.8,262.28 854.2,253.58 860.6,256.88 867,260.58 873.4,255.58 879.8,260.88 886.2,270.28 892.6,274.78 899,275.28" fill="none" stroke="#d98a8a" stroke-width="1.4" stroke-linejoin="round"/><circle cx="854.2" cy="253.58" r="1.4" fill="#3fb21f"/><circle cx="899" cy="275.28" r="1.4" fill="#e3211b"/><ellipse cx="930.7" cy="263.48" rx="5.5" ry="4.3" fill="#a8a8a8"/><path d="M926.7 265.48 L925.6 268.58 L929.7 267.28 Z" fill="#a8a8a8"/><g transform="translate(7,287.26)"><path d="M0 1.5 Q0 0 1.5 0 L6 0 L12 6 L6 12 L0 6 Z" fill="#c4c4c4"/><circle cx="2.7" cy="2.7" r="1.25" fill="#fff"/></g><polygon points="822.2,306.06 822.2,283.06 829.88,283.46 837.56,288.56 845.24,288.56 852.92,291.46 860.6,292.56 868.28,294.76 875.96,297.26 883.64,302.66 891.32,299.26 899,305.16 899,306.06" fill="#e8d9d9"/><polyline points="822.2,283.06 829.88,283.46 837.56,288.56 845.24,288.56 852.92,291.46 860.6,292.56 868.28,294.76 875.96,297.26 883.64,302.66 891.32,299.26 899,305.16" fill="none" stroke="#d98a8a" stroke-width="1.4" stroke-linejoin="round"/><circle cx="822.2" cy="283.06" r="1.4" fill="#3fb21f"/><circle cx="899" cy="305.16" r="1.4" fill="#e3211b"/><ellipse cx="930.7" cy="293.46" rx="5.5" ry="4.3" fill="#a8a8a8"/><path d="M926.7 295.46 L925.6 298.56 L929.7 297.26 Z" fill="#a8a8a8"/><g transform="translate(7,317.24)"><path d="M0 1.5 Q0 0 1.5 0 L6 0 L12 6 L6 12 L0 6 Z" fill="#c4c4c4"/><circle cx="2.7" cy="2.7" r="1.25" fill="#fff"/></g><polygon points="822.2,336.04 822.2,334.34 828.6,335.34 835,334.84 841.4,331.94 847.8,334.84 854.2,328.94 860.6,327.64 867,318.14 873.4,316.94 879.8,318.14 886.2,316.14 892.6,315.24 899,313.14 899,336.04" fill="#d3dcf8"/><polyline points="822.2,334.34 828.6,335.34 835,334.84 841.4,331.94 847.8,334.84 854.2,328.94 860.6,327.64 867,318.14 873.4,316.94 879.8,318.14 886.2,316.14 892.6,315.24 899,313.14" fill="none" stroke="#7585f2" stroke-width="1.4" stroke-linejoin="round"/><circle cx="899" cy="313.14" r="1.4" fill="#3fb21f"/><circle cx="828.6" cy="335.34" r="1.4" fill="#e3211b"/><ellipse cx="930.7" cy="323.44" rx="5.5" ry="4.3" fill="#a8a8a8"/><path d="M926.7 325.44 L925.6 328.54 L929.7 327.24 Z" fill="#a8a8a8"/><g transform="translate(7,347.22)"><path d="M0 1.5 Q0 0 1.5 0 L6 0 L12 6 L6 12 L0 6 Z" fill="#c4c4c4"/><circle cx="2.7" cy="2.7" r="1.25" fill="#fff"/></g><polygon points="822.2,366.02 822.2,365.22 828.6,359.82 835,363.22 841.4,356.52 847.8,352.32 854.2,356.52 860.6,358.62 867,351.02 873.4,352.32 879.8,345.32 886.2,344.82 892.6,343.12 899,343.12 899,366.02" fill="#d3dcf8"/><polyline points="822.2,365.22 828.6,359.82 835,363.22 841.4,356.52 847.8,352.32 854.2,356.52 860.6,358.62 867,351.02 873.4,352.32 879.8,345.32 886.2,344.82 892.6,343.12 899,343.12" fill="none" stroke="#7585f2" stroke-width="1.4" stroke-linejoin="round"/><circle cx="892.6" cy="343.12" r="1.4" fill="#3fb21f"/><circle cx="822.2" cy="365.22" r="1.4" fill="#e3211b"/><circle cx="899" cy="343.12" r="1.4" fill="#f29a2e"/><ellipse cx="930.7" cy="353.42" rx="5.5" ry="4.3" fill="#a8a8a8"/><path d="M926.7 355.42 L925.6 358.52 L929.7 357.22 Z" fill="#a8a8a8"/><g transform="translate(7,377.2)"><path d="M0 1.5 Q0 0 1.5 0 L6 0 L12 6 L6 12 L0 6 Z" fill="#c4c4c4"/><circle cx="2.7" cy="2.7" r="1.25" fill="#fff"/></g><polygon points="822.2,396 822.2,383.8 828.11,381.8 834.02,385.5 839.92,380.5 845.83,387.2 851.74,383 857.65,386.3 863.55,384.7 869.46,391.3 875.37,394.7 881.28,380.2 887.18,377.1 893.09,372.5 899,374.6 899,396" fill="#d3dcf8"/><polyline points="822.2,383.8 828.11,381.8 834.02,385.5 839.92,380.5 845.83,387.2 851.74,383 857.65,386.3 863.55,384.7 869.46,391.3 875.37,394.7 881.28,380.2 887.18,377.1 893.09,372.5 899,374.6" fill="none" stroke="#7585f2" stroke-width="1.4" stroke-linejoin="round"/><circle cx="893.09" cy="372.5" r="1.4" fill="#3fb21f"/><circle cx="875.37" cy="394.7" r="1.4" fill="#e3211b"/><circle cx="899" cy="374.6" r="1.4" fill="#f29a2e"/><ellipse cx="930.7" cy="383.4" rx="5.5" ry="4.3" fill="#a8a8a8"/><path d="M926.7 385.4 L925.6 388.5 L929.7 387.2 Z" fill="#a8a8a8"/><g transform="translate(7,407.18)"><path d="M0 1.5 Q0 0 1.5 0 L6 0 L12 6 L6 12 L0 6 Z" fill="#c4c4c4"/><circle cx="2.7" cy="2.7" r="1.25" fill="#fff"/></g><polygon points="822.2,425.98 822.2,403.38 829.88,416.68 837.56,419.18 845.24,412.48 852.92,409.68 860.6,417.48 868.28,415.98 875.96,420.58 883.64,425.08 891.32,411.38 899,412.18 899,425.98" fill="#d3dcf8"/><polyline points="822.2,403.38 829.88,416.68 837.56,419.18 845.24,412.48 852.92,409.68 860.6,417.48 868.28,415.98 875.96,420.58 883.64,425.08 891.32,411.38 899,412.18" fill="none" stroke="#7585f2" stroke-width="1.4" stroke-linejoin="round"/><circle cx="822.2" cy="403.38" r="1.4" fill="#3fb21f"/><circle cx="883.64" cy="425.08" r="1.4" fill="#e3211b"/><circle cx="899" cy="412.18" r="1.4" fill="#f29a2e"/><ellipse cx="930.7" cy="413.38" rx="5.5" ry="4.3" fill="#a8a8a8"/><path d="M926.7 415.38 L925.6 418.48 L929.7 417.18 Z" fill="#a8a8a8"/><g transform="translate(7,437.16)"><path d="M0 1.5 Q0 0 1.5 0 L6 0 L12 6 L6 12 L0 6 Z" fill="#c4c4c4"/><circle cx="2.7" cy="2.7" r="1.25" fill="#fff"/></g><polygon points="822.2,455.96 822.2,440.56 830.73,451.36 839.27,455.06 847.8,443.86 856.33,441.86 864.87,436.86 873.4,436.06 881.93,439.76 890.47,439.76 899,433.06 899,455.96" fill="#d3dcf8"/><polyline points="822.2,440.56 830.73,451.36 839.27,455.06 847.8,443.86 856.33,441.86 864.87,436.86 873.4,436.06 881.93,439.76 890.47,439.76 899,433.06" fill="none" stroke="#7585f2" stroke-width="1.4" stroke-linejoin="round"/><circle cx="899" cy="433.06" r="1.4" fill="#3fb21f"/><circle cx="839.27" cy="455.06" r="1.4" fill="#e3211b"/><ellipse cx="930.7" cy="443.36" rx="5.5" ry="4.3" fill="#a8a8a8"/><path d="M926.7 445.36 L925.6 448.46 L929.7 447.16 Z" fill="#a8a8a8"/><g transform="translate(7,467.14)"><path d="M0 1.5 Q0 0 1.5 0 L6 0 L12 6 L6 12 L0 6 Z" fill="#c4c4c4"/><circle cx="2.7" cy="2.7" r="1.25" fill="#fff"/></g><ellipse cx="930.7" cy="473.34" rx="5.5" ry="4.3" fill="#a8a8a8"/><path d="M926.7 475.34 L925.6 478.44 L929.7 477.14 Z" fill="#a8a8a8"/><g transform="translate(7,497.12)"><path d="M0 1.5 Q0 0 1.5 0 L6 0 L12 6 L6 12 L0 6 Z" fill="#c4c4c4"/><circle cx="2.7" cy="2.7" r="1.25" fill="#fff"/></g><polygon points="822.2,515.92 822.2,499.62 828.6,502.92 835,495.72 841.4,498.42 847.8,504.62 854.2,502.42 860.6,514.32 867,512.42 873.4,504.92 879.8,506.22 886.2,514.92 892.6,513.42 899,492.92 899,515.92" fill="#d3dcf8"/><polyline points="822.2,499.62 828.6,502.92 835,495.72 841.4,498.42 847.8,504.62 854.2,502.42 860.6,514.32 867,512.42 873.4,504.92 879.8,506.22 886.2,514.92 892.6,513.42 899,492.92" fill="none" stroke="#7585f2" stroke-width="1.4" stroke-linejoin="round"/><circle cx="899" cy="492.92" r="1.4" fill="#3fb21f"/><circle cx="886.2" cy="514.92" r="1.4" fill="#e3211b"/><ellipse cx="930.7" cy="503.32" rx="5.5" ry="4.3" fill="#a8a8a8"/><path d="M926.7 505.32 L925.6 508.42 L929.7 507.12 Z" fill="#a8a8a8"/><g transform="translate(7,527.1)"><path d="M0 1.5 Q0 0 1.5 0 L6 0 L12 6 L6 12 L0 6 Z" fill="#c4c4c4"/><circle cx="2.7" cy="2.7" r="1.25" fill="#fff"/></g><polygon points="822.2,545.9 822.2,540.8 828.6,541.8 835,537.1 841.4,536.3 847.8,540 854.2,539.1 860.6,536.3 867,533.4 873.4,540 879.8,538 886.2,545 892.6,540.5 899,522.6 899,545.9" fill="#d3dcf8"/><polyline points="822.2,540.8 828.6,541.8 835,537.1 841.4,536.3 847.8,540 854.2,539.1 860.6,536.3 867,533.4 873.4,540 879.8,538 886.2,545 892.6,540.5 899,522.6" fill="none" stroke="#7585f2" stroke-width="1.4" stroke-linejoin="round"/><circle cx="899" cy="522.6" r="1.4" fill="#3fb21f"/><circle cx="886.2" cy="545" r="1.4" fill="#e3211b"/><ellipse cx="930.7" cy="533.3" rx="5.5" ry="4.3" fill="#a8a8a8"/><path d="M926.7 535.3 L925.6 538.4 L929.7 537.1 Z" fill="#a8a8a8"/><g transform="translate(7,557.08)"><path d="M0 1.5 Q0 0 1.5 0 L6 0 L12 6 L6 12 L0 6 Z" fill="#c4c4c4"/><circle cx="2.7" cy="2.7" r="1.25" fill="#fff"/></g><polygon points="822.2,575.88 822.2,560.78 828.6,559.18 835,574.68 841.4,563.48 847.8,552.98 854.2,557.18 860.6,565.18 867,560.48 873.4,555.48 879.8,554.68 886.2,566.68 892.6,563.48 899,552.08 899,575.88" fill="#d3dcf8"/><polyline points="822.2,560.78 828.6,559.18 835,574.68 841.4,563.48 847.8,552.98 854.2,557.18 860.6,565.18 867,560.48 873.4,555.48 879.8,554.68 886.2,566.68 892.6,563.48 899,552.08" fill="none" stroke="#7585f2" stroke-width="1.4" stroke-linejoin="round"/><circle cx="899" cy="552.08" r="1.4" fill="#3fb21f"/><circle cx="835" cy="574.68" r="1.4" fill="#e3211b"/><ellipse cx="930.7" cy="563.28" rx="5.5" ry="4.3" fill="#a8a8a8"/><path d="M926.7 565.28 L925.6 568.38 L929.7 567.08 Z" fill="#a8a8a8"/><g transform="translate(7,587.06)"><path d="M0 1.5 Q0 0 1.5 0 L6 0 L12 6 L6 12 L0 6 Z" fill="#c4c4c4"/><circle cx="2.7" cy="2.7" r="1.25" fill="#fff"/></g><polygon points="822.2,605.86 822.2,587.86 828.11,584.56 834.02,590.06 839.92,585.36 845.83,588.66 851.74,588.66 857.65,585.66 863.55,594.56 869.46,582.86 875.37,587.36 881.28,597.36 887.18,597.86 893.09,604.56 899,599.56 899,605.86" fill="#e8d9d9"/><polyline points="822.2,587.86 828.11,584.56 834.02,590.06 839.92,585.36 845.83,588.66 851.74,588.66 857.65,585.66 863.55,594.56 869.46,582.86 875.37,587.36 881.28,597.36 887.18,597.86 893.09,604.56 899,599.56" fill="none" stroke="#d98a8a" stroke-width="1.4" stroke-linejoin="round"/><circle cx="869.46" cy="582.86" r="1.4" fill="#3fb21f"/><circle cx="893.09" cy="604.56" r="1.4" fill="#e3211b"/><circle cx="899" cy="599.56" r="1.4" fill="#f29a2e"/><ellipse cx="930.7" cy="593.26" rx="5.5" ry="4.3" fill="#a8a8a8"/><path d="M926.7 595.26 L925.6 598.36 L929.7 597.06 Z" fill="#a8a8a8"/><g transform="translate(7,617.04)"><path d="M0 1.5 Q0 0 1.5 0 L6 0 L12 6 L6 12 L0 6 Z" fill="#c4c4c4"/><circle cx="2.7" cy="2.7" r="1.25" fill="#fff"/></g><polygon points="822.2,635.84 822.2,632.94 829.18,634.54 836.16,624.54 843.15,625.44 850.13,615.04 857.11,613.74 864.09,620.04 871.07,614.04 878.05,621.74 885.04,612.84 892.02,634.04 899,631.24 899,635.84" fill="#e8d9d9"/><polyline points="822.2,632.94 829.18,634.54 836.16,624.54 843.15,625.44 850.13,615.04 857.11,613.74 864.09,620.04 871.07,614.04 878.05,621.74 885.04,612.84 892.02,634.04 899,631.24" fill="none" stroke="#d98a8a" stroke-width="1.4" stroke-linejoin="round"/><circle cx="885.04" cy="612.84" r="1.4" fill="#3fb21f"/><circle cx="829.18" cy="634.54" r="1.4" fill="#e3211b"/><circle cx="899" cy="631.24" r="1.4" fill="#f29a2e"/><ellipse cx="930.7" cy="623.24" rx="5.5" ry="4.3" fill="#a8a8a8"/><path d="M926.7 625.24 L925.6 628.34 L929.7 627.04 Z" fill="#a8a8a8"/><g transform="translate(7,647.02)"><path d="M0 1.5 Q0 0 1.5 0 L6 0 L12 6 L6 12 L0 6 Z" fill="#c4c4c4"/><circle cx="2.7" cy="2.7" r="1.25" fill="#fff"/></g><polygon points="822.2,665.82 822.2,658.72 828.11,658.72 834.02,650.72 839.92,651.72 845.83,644.62 851.74,643.72 857.65,650.72 863.55,642.42 869.46,651.22 875.37,647.42 881.28,660.12 887.18,661.72 893.09,664.62 899,664.62 899,665.82" fill="#e8d9d9"/><polyline points="822.2,658.72 828.11,658.72 834.02,650.72 839.92,651.72 845.83,644.62 851.74,643.72 857.65,650.72 863.55,642.42 869.46,651.22 875.37,647.42 881.28,660.12 887.18,661.72 893.09,664.62 899,664.62" fill="none" stroke="#d98a8a" stroke-width="1.4" stroke-linejoin="round"/><circle cx="863.55" cy="642.42" r="1.4" fill="#3fb21f"/><circle cx="893.09" cy="664.62" r="1.4" fill="#e3211b"/><circle cx="899" cy="664.62" r="1.4" fill="#f29a2e"/><ellipse cx="930.7" cy="653.22" rx="5.5" ry="4.3" fill="#a8a8a8"/><path d="M926.7 655.22 L925.6 658.32 L929.7 657.02 Z" fill="#a8a8a8"/></svg>
<div class="pg dis" style="left:735.2px;width:19px"><svg width="6" height="8" style="vertical-align:-0.5px"><path d="M4.6 0.9 L1.6 4 L4.6 7.1" stroke="#8a9099" stroke-width="1.6" fill="none"/></svg></div>
<div class="pg act" style="left:758.3px;width:17px">1</div>
<div class="pg" style="left:779.4px;width:17.2px">2</div>
<div class="pg" style="left:800px;width:17.7px">3</div>
<div class="pg" style="left:821.3px;width:17.2px">4</div>
<div class="pg" style="left:842.4px;width:16.8px">5</div>
<div class="pg dis" style="left:863.5px;width:16.7px">..</div>
<div class="pg" style="left:884.8px;width:30.5px">210</div>
<div class="pg" style="left:919.2px;width:19.5px"><svg width="6" height="8" style="vertical-align:-0.5px"><path d="M1.4 0.9 L4.4 4 L1.4 7.1" stroke="#4a4a4a" stroke-width="1.9" fill="none"/></svg></div>
</div>
</div>
<div style="position:absolute;left:20px;top:246px;width:600px;height:447px;border:2px solid #052e6b;background:#fff;overflow:hidden">
<div class="ui" style="transform:translate(0.72px,1px) scale(0.6324,0.6315);transform-origin:0 0">
<div style="position:absolute;left:0;top:2px;width:948px;height:1.5px;background:#ebebeb"></div>
<div style="position:absolute;left:0;top:3.5px;width:948px;height:31.5px;background:#f7f7f7"></div>
<div class="tabt" style="left:12.3px;top:6.2px;font-size:12.9px;-webkit-text-stroke:0.25px #333;color:#333;transform:scaleX(0.983);transform-origin:0 0">Trading Activity</div>
<div class="tab" style="left:109.8px;width:111px;background:#e0e0e0"><span style="display:inline-block;transform:scaleX(0.933)">Open Trades (12)</span></div>
<div class="tab" style="left:223.3px;width:103.2px;background:#e0e0e0"><span style="display:inline-block;transform:scaleX(0.919)">Open Orders (0)</span></div>
<div class="tab" style="left:327.8px;width:96.2px;background:#ffffff"><span style="display:inline-block;transform:scaleX(0.966)">History (4198)</span></div>
<div class="tab" style="left:426.5px;width:69.3px;background:#e0e0e0"><span style="display:inline-block;transform:scaleX(0.96)">Exposure</span></div>
<svg style="position:absolute;left:0;top:0" width="948" height="40"><g stroke="#333" fill="none">
<line x1="919.6" y1="13.04" x2="936.9" y2="13.04" stroke-width="1.6"/>
<line x1="919.6" y1="18.56" x2="936.9" y2="18.56" stroke-width="1.3"/>
<line x1="919.6" y1="24.23" x2="936.9" y2="24.23" stroke-width="1.6"/>
<circle cx="932.2" cy="13.04" r="2.5" fill="#f7f7f7" stroke-width="1.2"/>
<circle cx="924.5" cy="18.56" r="2.5" fill="#f7f7f7" stroke-width="1.2"/>
<circle cx="932.2" cy="24.23" r="2.5" fill="#f7f7f7" stroke-width="1.2"/></g></svg>
<div style="left:0;top:0.52px;width:948px;height:707px">
<div class="hd" style="left:12px;top:53.2px;height:16px;line-height:16px;font-size:10.37px;transform:scaleX(0.93);">Open Date</div>
<div class="hd" style="left:207.8px;top:53.2px;height:16px;line-height:16px;font-size:10.63px;transform:scaleX(0.93);">Symbol</div>
<div class="hd" style="left:257.6px;top:53.2px;height:16px;line-height:16px;font-size:10.69px;transform:scaleX(0.93);">Action</div>
<div class="hd" style="left:293.5px;top:53.2px;height:16px;line-height:16px;font-size:10.69px;transform:scaleX(0.93);">Lots</div>
<div class="hd" style="left:439.1px;top:53.2px;height:16px;line-height:16px;font-size:10.37px;transform:scaleX(0.93);">Open Price</div>
<div class="hd" style="left:505.8px;top:53.2px;height:16px;line-height:16px;font-size:10.48px;transform:scaleX(0.93);">Close Price</div>
<div class="hd" style="left:557.3px;top:53.2px;height:16px;line-height:16px;font-size:10.69px;transform:scaleX(0.93);">Pips</div>
<div class="hd" style="left:603.8px;top:53.2px;height:16px;line-height:16px;font-size:10.69px;transform:scaleX(0.93);">Net Profit</div>
<div class="hd" style="left:662.3px;top:53.2px;height:16px;line-height:16px;font-size:10.69px;transform:scaleX(0.93);">Duration</div>
<div class="hd" style="left:714px;top:53.2px;height:16px;line-height:16px;font-size:10.58px;transform:scaleX(0.93);">Gain</div>
<div class="hd" style="left:121.4px;top:51.5px;height:16px;line-height:16px;font-size:10.26px;transform:scaleX(0.93);">Close date<span class="tri"></span></div>
<div class="hd" style="left:330px;top:39.3px;height:16px;line-height:16px;font-size:11.12px;transform:scaleX(0.93);">SL</div>
<div class="hd" style="left:330px;top:53.9px;height:16px;line-height:16px;font-size:10.8px;transform:scaleX(0.93);">(Price)</div>
<div class="hd" style="left:378.4px;top:39.3px;height:16px;line-height:16px;font-size:11.12px;transform:scaleX(0.93);">TP</div>
<div class="hd" style="left:378.4px;top:53.9px;height:16px;line-height:16px;font-size:10.8px;transform:scaleX(0.93);">(Price)</div>
<div style="position:absolute;left:0;top:69px;width:948px;height:29.98px;background:#f9fafd;border-top:1px solid #edf0f3;box-sizing:border-box"></div>
<div style="position:absolute;left:421px;width:54px;top:69.8px;height:29.18px;background:#e3f9db"></div>
<div class="d" style="left:12px;top:69.6px;height:28.98px;line-height:28.98px;font-size:11.34px;transform:scaleX(0.93);">10.10.2024 03:42</div>
<div class="d" style="left:123.2px;top:69.6px;height:28.98px;line-height:28.98px;font-size:11.34px;transform:scaleX(0.93);">10.10.2024 11:32</div>
<div class="d sym" style="left:207.8px;top:69.6px;height:28.98px;line-height:28.98px;font-size:11.66px;transform:scaleX(0.93);"><span class="su">NZDCAD</span></div>
<div class="d lt" style="left:257.6px;top:69.6px;height:28.98px;line-height:28.98px;font-size:11.88px;transform:scaleX(0.93);">Buy</div>
<div class="d" style="left:293.5px;top:69.6px;height:28.98px;line-height:28.98px;font-size:11.34px;transform:scaleX(0.93);">0.03</div>
<div class="d" style="left:330px;top:69.6px;height:28.98px;line-height:28.98px;font-size:11.34px;transform:scaleX(0.93);">-</div>
<div class="d" style="left:378.4px;top:69.6px;height:28.98px;line-height:28.98px;font-size:11.34px;transform:scaleX(0.93);">0.83517</div>
<div class="d" style="left:439.1px;top:69.6px;height:28.98px;line-height:28.98px;font-size:11.34px;transform:scaleX(0.93);">0.83432</div>
<div class="d" style="left:505.8px;top:69.6px;height:28.98px;line-height:28.98px;font-size:11.34px;transform:scaleX(0.93);">0.8352</div>
<div class="d" style="left:557.3px;top:69.6px;height:28.98px;line-height:28.98px;font-size:11.34px;transform:scaleX(0.93);color:#47a947;-webkit-text-stroke:0.2px #47a947">8.8</div>
<div class="d" style="left:603.8px;top:69.6px;height:28.98px;line-height:28.98px;font-size:11.34px;transform:scaleX(0.93);color:#47a947;-webkit-text-stroke:0.2px #47a947">1.71</div>
<div class="d lt" style="left:662.3px;top:69.6px;height:28.98px;line-height:28.98px;font-size:11.88px;transform:scaleX(0.93);">7h 50m</div>
<div class="d" style="left:714px;top:69.6px;height:28.98px;line-height:28.98px;font-size:11.34px;transform:scaleX(0.93);color:#47a947;-webkit-text-stroke:0.2px #47a947">0.00%</div>
<div style="position:absolute;left:0;top:98.98px;width:948px;height:29.98px;background:#ffffff;border-top:1px solid #edf0f3;box-sizing:border-box"></div>
<div style="position:absolute;left:421px;width:54px;top:99.78px;height:29.18px;background:#e3f9db"></div>
<div class="d" style="left:12px;top:99.58px;height:28.98px;line-height:28.98px;font-size:11.34px;transform:scaleX(0.93);">10.09.2024 21:17</div>
<div class="d" style="left:123.2px;top:99.58px;height:28.98px;line-height:28.98px;font-size:11.34px;transform:scaleX(0.93);">10.10.2024 02:34</div>
<div class="d sym" style="left:207.8px;top:99.58px;height:28.98px;line-height:28.98px;font-size:11.66px;transform:scaleX(0.93);"><span class="su">AUDCAD</span></div>
<div class="d lt" style="left:257.6px;top:99.58px;height:28.98px;line-height:28.98px;font-size:11.88px;transform:scaleX(0.93);">Buy</div>
<div class="d" style="left:293.5px;top:99.58px;height:28.98px;line-height:28.98px;font-size:11.34px;transform:scaleX(0.93);">0.03</div>
<div class="d" style="left:330px;top:99.58px;height:28.98px;line-height:28.98px;font-size:11.34px;transform:scaleX(0.93);">-</div>
<div class="d" style="left:378.4px;top:99.58px;height:28.98px;line-height:28.98px;font-size:11.34px;transform:scaleX(0.93);">0.92216</div>
<div class="d" style="left:439.1px;top:99.58px;height:28.98px;line-height:28.98px;font-size:11.34px;transform:scaleX(0.93);">0.92131</div>
<div class="d" style="left:505.8px;top:99.58px;height:28.98px;line-height:28.98px;font-size:11.34px;transform:scaleX(0.93);">0.92216</div>
<div class="d" style="left:557.3px;top:99.58px;height:28.98px;line-height:28.98px;font-size:11.34px;transform:scaleX(0.93);color:#47a947;-webkit-text-stroke:0.2px #47a947">8.5</div>
<div class="d" style="left:603.8px;top:99.58px;height:28.98px;line-height:28.98px;font-size:11.34px;transform:scaleX(0.93);color:#47a947;-webkit-text-stroke:0.2px #47a947">1.63</div>
<div class="d lt" style="left:662.3px;top:99.58px;height:28.98px;line-height:28.98px;font-size:11.88px;transform:scaleX(0.93);">5h 16m</div>
<div class="d" style="left:714px;top:99.58px;height:28.98px;line-height:28.98px;font-size:11.34px;transform:scaleX(0.93);color:#47a947;-webkit-text-stroke:0.2px #47a947">0.00%</div>
<div style="position:absolute;left:0;top:128.96px;width:948px;height:29.98px;background:#f9fafd;border-top:1px solid #edf0f3;box-sizing:border-box"></div>
<div style="position:absolute;left:421px;width:54px;top:129.76px;height:29.18px;background:#e3f9db"></div>
<div class="d" style="left:12px;top:129.56px;height:28.98px;line-height:28.98px;font-size:11.34px;transform:scaleX(0.93);">10.10.2024 02:14</div>
<div class="d" style="left:123.2px;top:129.56px;height:28.98px;line-height:28.98px;font-size:11.34px;transform:scaleX(0.93);">10.10.2024 02:33</div>
<div class="d sym" style="left:207.8px;top:129.56px;height:28.98px;line-height:28.98px;font-size:11.66px;transform:scaleX(0.93);"><span class="su">NZDCAD</span></div>
<div class="d lt" style="left:257.6px;top:129.56px;height:28.98px;line-height:28.98px;font-size:11.88px;transform:scaleX(0.93);">Buy</div>
<div class="d" style="left:293.5px;top:129.56px;height:28.98px;line-height:28.98px;font-size:11.34px;transform:scaleX(0.93);">0.03</div>
<div class="d" style="left:330px;top:129.56px;height:28.98px;line-height:28.98px;font-size:11.34px;transform:scaleX(0.93);">-</div>
<div class="d" style="left:378.4px;top:129.56px;height:28.98px;line-height:28.98px;font-size:11.34px;transform:scaleX(0.93);">0.83393</div>
<div class="d" style="left:439.1px;top:129.56px;height:28.98px;line-height:28.98px;font-size:11.34px;transform:scaleX(0.93);">0.83308</div>
<div class="d" style="left:505.8px;top:129.56px;height:28.98px;line-height:28.98px;font-size:11.34px;transform:scaleX(0.93);">0.83394</div>
<div class="d" style="left:557.3px;top:129.56px;height:28.98px;line-height:28.98px;font-size:11.34px;transform:scaleX(0.93);color:#47a947;-webkit-text-stroke:0.2px #47a947">8.6</div>
<div class="d" style="left:603.8px;top:129.56px;height:28.98px;line-height:28.98px;font-size:11.34px;transform:scaleX(0.93);color:#47a947;-webkit-text-stroke:0.2px #47a947">1.67</div>
<div class="d lt" style="left:662.3px;top:129.56px;height:28.98px;line-height:28.98px;font-size:11.88px;transform:scaleX(0.93);">19m</div>
<div class="d" style="left:714px;top:129.56px;height:28.98px;line-height:28.98px;font-size:11.34px;transform:scaleX(0.93);color:#47a947;-webkit-text-stroke:0.2px #47a947">0.00%</div>
<div style="position:absolute;left:0;top:158.94px;width:948px;height:29.98px;background:#ffffff;border-top:1px solid #edf0f3;box-sizing:border-box"></div>
<div style="position:absolute;left:421px;width:54px;top:159.74px;height:29.18px;background:#e3f9db"></div>
<div class="d" style="left:12px;top:159.54px;height:28.98px;line-height:28.98px;font-size:11.34px;transform:scaleX(0.93);">10.09.2024 13:08</div>
<div class="d" style="left:123.2px;top:159.54px;height:28.98px;line-height:28.98px;font-size:11.34px;transform:scaleX(0.93);">10.10.2024 02:32</div>
<div class="d sym" style="left:207.8px;top:159.54px;height:28.98px;line-height:28.98px;font-size:11.66px;transform:scaleX(0.93);"><span class="su">NZDUSD</span></div>
<div class="d lt" style="left:257.6px;top:159.54px;height:28.98px;line-height:28.98px;font-size:11.88px;transform:scaleX(0.93);">Buy</div>
<div class="d" style="left:293.5px;top:159.54px;height:28.98px;line-height:28.98px;font-size:11.34px;transform:scaleX(0.93);">0.04</div>
<div class="d" style="left:330px;top:159.54px;height:28.98px;line-height:28.98px;font-size:11.34px;transform:scaleX(0.93);">-</div>
<div class="d" style="left:378.4px;top:159.54px;height:28.98px;line-height:28.98px;font-size:11.34px;transform:scaleX(0.93);">0.60828</div>
<div class="d" style="left:439.1px;top:159.54px;height:28.98px;line-height:28.98px;font-size:11.34px;transform:scaleX(0.93);">0.60614</div>
<div class="d" style="left:505.8px;top:159.54px;height:28.98px;line-height:28.98px;font-size:11.34px;transform:scaleX(0.93);">0.60828</div>
<div class="d" style="left:557.3px;top:159.54px;height:28.98px;line-height:28.98px;font-size:11.34px;transform:scaleX(0.93);color:#47a947;-webkit-text-stroke:0.2px #47a947">21.4</div>
<div class="d" style="left:603.8px;top:159.54px;height:28.98px;line-height:28.98px;font-size:11.34px;transform:scaleX(0.93);color:#47a947;-webkit-text-stroke:0.2px #47a947">8.27</div>
<div class="d lt" style="left:662.3px;top:159.54px;height:28.98px;line-height:28.98px;font-size:11.88px;transform:scaleX(0.93);">13h 24m</div>
<div class="d" style="left:714px;top:159.54px;height:28.98px;line-height:28.98px;font-size:11.34px;transform:scaleX(0.93);color:#47a947;-webkit-text-stroke:0.2px #47a947">0.02%</div>
<div style="position:absolute;left:0;top:188.92px;width:948px;height:29.98px;background:#f9fafd;border-top:1px solid #edf0f3;box-sizing:border-box"></div>
<div style="position:absolute;left:421px;width:54px;top:189.72px;height:29.18px;background:#e3f9db"></div>
<div class="d" style="left:12px;top:189.52px;height:28.98px;line-height:28.98px;font-size:11.34px;transform:scaleX(0.93);">10.09.2024 11:43</div>
<div class="d" style="left:123.2px;top:189.52px;height:28.98px;line-height:28.98px;font-size:11.34px;transform:scaleX(0.93);">10.10.2024 02:32</div>
<div class="d sym" style="left:207.8px;top:189.52px;height:28.98px;line-height:28.98px;font-size:11.66px;transform:scaleX(0.93);"><span class="su">NZDUSD</span></div>
<div class="d lt" style="left:257.6px;top:189.52px;height:28.98px;line-height:28.98px;font-size:11.88px;transform:scaleX(0.93);">Buy</div>
<div class="d" style="left:293.5px;top:189.52px;height:28.98px;line-height:28.98px;font-size:11.34px;transform:scaleX(0.93);">0.03</div>
<div class="d" style="left:330px;top:189.52px;height:28.98px;line-height:28.98px;font-size:11.34px;transform:scaleX(0.93);">-</div>
<div class="d" style="left:378.4px;top:189.52px;height:28.98px;line-height:28.98px;font-size:11.34px;transform:scaleX(0.93);">0.60828</div>
<div class="d" style="left:439.1px;top:189.52px;height:28.98px;line-height:28.98px;font-size:11.34px;transform:scaleX(0.93);">0.6072</div>
<div class="d" style="left:505.8px;top:189.52px;height:28.98px;line-height:28.98px;font-size:11.34px;transform:scaleX(0.93);">0.60828</div>
<div class="d" style="left:557.3px;top:189.52px;height:28.98px;line-height:28.98px;font-size:11.34px;transform:scaleX(0.93);color:#47a947;-webkit-text-stroke:0.2px #47a947">10.8</div>
<div class="d" style="left:603.8px;top:189.52px;height:28.98px;line-height:28.98px;font-size:11.34px;transform:scaleX(0.93);color:#47a947;-webkit-text-stroke:0.2px #47a947">3.02</div>
<div class="d lt" style="left:662.3px;top:189.52px;height:28.98px;line-height:28.98px;font-size:11.88px;transform:scaleX(0.93);">14h 49m</div>
<div class="d" style="left:714px;top:189.52px;height:28.98px;line-height:28.98px;font-size:11.34px;transform:scaleX(0.93);color:#47a947;-webkit-text-stroke:0.2px #47a947">0.01%</div>
<div style="position:absolute;left:0;top:218.9px;width:948px;height:29.98px;background:#ffffff;border-top:1px solid #edf0f3;box-sizing:border-box"></div>
<div style="position:absolute;left:421px;width:54px;top:219.7px;height:29.18px;background:#e3f9db"></div>
<div class="d" style="left:12px;top:219.5px;height:28.98px;line-height:28.98px;font-size:11.34px;transform:scaleX(0.93);">10.09.2024 06:24</div>
<div class="d" style="left:123.2px;top:219.5px;height:28.98px;line-height:28.98px;font-size:11.34px;transform:scaleX(0.93);">10.10.2024 02:32</div>
<div class="d sym" style="left:207.8px;top:219.5px;height:28.98px;line-height:28.98px;font-size:11.66px;transform:scaleX(0.93);"><span class="su">NZDUSD</span></div>
<div class="d lt" style="left:257.6px;top:219.5px;height:28.98px;line-height:28.98px;font-size:11.88px;transform:scaleX(0.93);">Buy</div>
<div class="d" style="left:293.5px;top:219.5px;height:28.98px;line-height:28.98px;font-size:11.34px;transform:scaleX(0.93);">0.03</div>
<div class="d" style="left:330px;top:219.5px;height:28.98px;line-height:28.98px;font-size:11.34px;transform:scaleX(0.93);">-</div>
<div class="d" style="left:378.4px;top:219.5px;height:28.98px;line-height:28.98px;font-size:11.34px;transform:scaleX(0.93);">0.60828</div>
<div class="d" style="left:439.1px;top:219.5px;height:28.98px;line-height:28.98px;font-size:11.34px;transform:scaleX(0.93);">0.60938</div>
<div class="d" style="left:505.8px;top:219.5px;height:28.98px;line-height:28.98px;font-size:11.34px;transform:scaleX(0.93);">0.60828</div>
<div class="d" style="left:557.3px;top:219.5px;height:28.98px;line-height:28.98px;font-size:11.34px;transform:scaleX(0.93);color:#e0504a;-webkit-text-stroke:0.2px #e0504a">-11.0</div>
<div class="d" style="left:603.8px;top:219.5px;height:28.98px;line-height:28.98px;font-size:11.34px;transform:scaleX(0.93);color:#e0504a;-webkit-text-stroke:0.2px #e0504a">-3.52</div>
<div class="d lt" style="left:662.3px;top:219.5px;height:28.98px;line-height:28.98px;font-size:11.88px;transform:scaleX(0.93);">20h 8m</div>
<div class="d" style="left:714px;top:219.5px;height:28.98px;line-height:28.98px;font-size:11.34px;transform:scaleX(0.93);color:#e0504a;-webkit-text-stroke:0.2px #e0504a">-0.01%</div>
<div style="position:absolute;left:0;top:248.88px;width:948px;height:29.98px;background:#f9fafd;border-top:1px solid #edf0f3;box-sizing:border-box"></div>
<div class="d" style="left:12px;top:249.48px;height:28.98px;line-height:28.98px;font-size:11.34px;transform:scaleX(0.93);">10.09.2024 13:18</div>
<div class="d" style="left:123.2px;top:249.48px;height:28.98px;line-height:28.98px;font-size:11.34px;transform:scaleX(0.93);">10.10.2024 01:30</div>
<div class="d sym" style="left:207.8px;top:249.48px;height:28.98px;line-height:28.98px;font-size:11.66px;transform:scaleX(0.93);"><span class="su">NZDCAD</span></div>
<div class="d lt" style="left:257.6px;top:249.48px;height:28.98px;line-height:28.98px;font-size:11.88px;transform:scaleX(0.93);">Buy</div>
<div class="d" style="left:293.5px;top:249.48px;height:28.98px;line-height:28.98px;font-size:11.34px;transform:scaleX(0.93);">0.06</div>
<div class="d" style="left:330px;top:249.48px;height:28.98px;line-height:28.98px;font-size:11.34px;transform:scaleX(0.93);">-</div>
<div class="d" style="left:378.4px;top:249.48px;height:28.98px;line-height:28.98px;font-size:11.34px;transform:scaleX(0.93);">0.83254</div>
<div class="d" style="left:439.1px;top:249.48px;height:28.98px;line-height:28.98px;font-size:11.34px;transform:scaleX(0.93);">0.82924</div>
<div class="d" style="left:505.8px;top:249.48px;height:28.98px;line-height:28.98px;font-size:11.34px;transform:scaleX(0.93);">0.8325</div>
<div class="d" style="left:557.3px;top:249.48px;height:28.98px;line-height:28.98px;font-size:11.34px;transform:scaleX(0.93);color:#47a947;-webkit-text-stroke:0.2px #47a947">32.6</div>
<div class="d" style="left:603.8px;top:249.48px;height:28.98px;line-height:28.98px;font-size:11.34px;transform:scaleX(0.93);color:#47a947;-webkit-text-stroke:0.2px #47a947">13.88</div>
<div class="d lt" style="left:662.3px;top:249.48px;height:28.98px;line-height:28.98px;font-size:11.88px;transform:scaleX(0.93);">12h 12m</div>
<div class="d" style="left:714px;top:249.48px;height:28.98px;line-height:28.98px;font-size:11.34px;transform:scaleX(0.93);color:#47a947;-webkit-text-stroke:0.2px #47a947">0.04%</div>
<div style="position:absolute;left:0;top:278.86px;width:948px;height:29.98px;background:#ffffff;border-top:1px solid #edf0f3;box-sizing:border-box"></div>
<div class="d" style="left:12px;top:279.46px;height:28.98px;line-height:28.98px;font-size:11.34px;transform:scaleX(0.93);">10.09.2024 12:56</div>
<div class="d" style="left:123.2px;top:279.46px;height:28.98px;line-height:28.98px;font-size:11.34px;transform:scaleX(0.93);">10.10.2024 01:30</div>
<div class="d sym" style="left:207.8px;top:279.46px;height:28.98px;line-height:28.98px;font-size:11.66px;transform:scaleX(0.93);"><span class="su">NZDCAD</span></div>
<div class="d lt" style="left:257.6px;top:279.46px;height:28.98px;line-height:28.98px;font-size:11.88px;transform:scaleX(0.93);">Buy</div>
<div class="d" style="left:293.5px;top:279.46px;height:28.98px;line-height:28.98px;font-size:11.34px;transform:scaleX(0.93);">0.05</div>
<div class="d" style="left:330px;top:279.46px;height:28.98px;line-height:28.98px;font-size:11.34px;transform:scaleX(0.93);">-</div>
<div class="d" style="left:378.4px;top:279.46px;height:28.98px;line-height:28.98px;font-size:11.34px;transform:scaleX(0.93);">0.83254</div>
<div class="d" style="left:439.1px;top:279.46px;height:28.98px;line-height:28.98px;font-size:11.34px;transform:scaleX(0.93);">0.82959</div>
<div class="d" style="left:505.8px;top:279.46px;height:28.98px;line-height:28.98px;font-size:11.34px;transform:scaleX(0.93);">0.8325</div>
<div class="d" style="left:557.3px;top:279.46px;height:28.98px;line-height:28.98px;font-size:11.34px;transform:scaleX(0.93);color:#47a947;-webkit-text-stroke:0.2px #47a947">29.1</div>
<div class="d" style="left:603.8px;top:279.46px;height:28.98px;line-height:28.98px;font-size:11.34px;transform:scaleX(0.93);color:#47a947;-webkit-text-stroke:0.2px #47a947">10.28</div>
<div class="d lt" style="left:662.3px;top:279.46px;height:28.98px;line-height:28.98px;font-size:11.88px;transform:scaleX(0.93);">12h 34m</div>
<div class="d" style="left:714px;top:279.46px;height:28.98px;line-height:28.98px;font-size:11.34px;transform:scaleX(0.93);color:#47a947;-webkit-text-stroke:0.2px #47a947">0.03%</div>
<div style="position:absolute;left:0;top:308.84px;width:948px;height:29.98px;background:#f9fafd;border-top:1px solid #edf0f3;box-sizing:border-box"></div>
<div class="d" style="left:12px;top:309.44px;height:28.98px;line-height:28.98px;font-size:11.34px;transform:scaleX(0.93);">10.09.2024 11:43</div>
<div class="d" style="left:123.2px;top:309.44px;height:28.98px;line-height:28.98px;font-size:11.34px;transform:scaleX(0.93);">10.10.2024 01:30</div>
<div class="d sym" style="left:207.8px;top:309.44px;height:28.98px;line-height:28.98px;font-size:11.66px;transform:scaleX(0.93);"><span class="su">NZDCAD</span></div>
<div class="d lt" style="left:257.6px;top:309.44px;height:28.98px;line-height:28.98px;font-size:11.88px;transform:scaleX(0.93);">Buy</div>
<div class="d" style="left:293.5px;top:309.44px;height:28.98px;line-height:28.98px;font-size:11.34px;transform:scaleX(0.93);">0.05</div>
<div class="d" style="left:330px;top:309.44px;height:28.98px;line-height:28.98px;font-size:11.34px;transform:scaleX(0.93);">-</div>
<div class="d" style="left:378.4px;top:309.44px;height:28.98px;line-height:28.98px;font-size:11.34px;transform:scaleX(0.93);">0.83254</div>
<div class="d" style="left:439.1px;top:309.44px;height:28.98px;line-height:28.98px;font-size:11.34px;transform:scaleX(0.93);">0.83048</div>
<div class="d" style="left:505.8px;top:309.44px;height:28.98px;line-height:28.98px;font-size:11.34px;transform:scaleX(0.93);">0.8325</div>
<div class="d" style="left:557.3px;top:309.44px;height:28.98px;line-height:28.98px;font-size:11.34px;transform:scaleX(0.93);color:#47a947;-webkit-text-stroke:0.2px #47a947">20.2</div>
<div class="d" style="left:603.8px;top:309.44px;height:28.98px;line-height:28.98px;font-size:11.34px;transform:scaleX(0.93);color:#47a947;-webkit-text-stroke:0.2px #47a947">7.03</div>
<div class="d lt" style="left:662.3px;top:309.44px;height:28.98px;line-height:28.98px;font-size:11.88px;transform:scaleX(0.93);">13h 47m</div>
<div class="d" style="left:714px;top:309.44px;height:28.98px;line-height:28.98px;font-size:11.34px;transform:scaleX(0.93);color:#47a947;-webkit-text-stroke:0.2px #47a947">0.02%</div>
<div style="position:absolute;left:0;top:338.82px;width:948px;height:29.98px;background:#ffffff;border-top:1px solid #edf0f3;box-sizing:border-box"></div>
<div class="d" style="left:12px;top:339.42px;height:28.98px;line-height:28.98px;font-size:11.34px;transform:scaleX(0.93);">10.09.2024 03:54</div>
<div class="d" style="left:123.2px;top:339.42px;height:28.98px;line-height:28.98px;font-size:11.34px;transform:scaleX(0.93);">10.10.2024 01:30</div>
<div class="d sym" style="left:207.8px;top:339.42px;height:28.98px;line-height:28.98px;font-size:11.66px;transform:scaleX(0.93);"><span class="su">NZDCAD</span></div>
<div class="d lt" style="left:257.6px;top:339.42px;height:28.98px;line-height:28.98px;font-size:11.88px;transform:scaleX(0.93);">Buy</div>
<div class="d" style="left:293.5px;top:339.42px;height:28.98px;line-height:28.98px;font-size:11.34px;transform:scaleX(0.93);">0.04</div>
<div class="d" style="left:330px;top:339.42px;height:28.98px;line-height:28.98px;font-size:11.34px;transform:scaleX(0.93);">-</div>
<div class="d" style="left:378.4px;top:339.42px;height:28.98px;line-height:28.98px;font-size:11.34px;transform:scaleX(0.93);">0.83254</div>
<div class="d" style="left:439.1px;top:339.42px;height:28.98px;line-height:28.98px;font-size:11.34px;transform:scaleX(0.93);">0.83069</div>
<div class="d" style="left:505.8px;top:339.42px;height:28.98px;line-height:28.98px;font-size:11.34px;transform:scaleX(0.93);">0.8325</div>
<div class="d" style="left:557.3px;top:339.42px;height:28.98px;line-height:28.98px;font-size:11.34px;transform:scaleX(0.93);color:#47a947;-webkit-text-stroke:0.2px #47a947">18.1</div>
<div class="d" style="left:603.8px;top:339.42px;height:28.98px;line-height:28.98px;font-size:11.34px;transform:scaleX(0.93);color:#47a947;-webkit-text-stroke:0.2px #47a947">5.02</div>
<div class="d lt" style="left:662.3px;top:339.42px;height:28.98px;line-height:28.98px;font-size:11.88px;transform:scaleX(0.93);">21h 36m</div>
<div class="d" style="left:714px;top:339.42px;height:28.98px;line-height:28.98px;font-size:11.34px;transform:scaleX(0.93);color:#47a947;-webkit-text-stroke:0.2px #47a947">0.01%</div>
<div style="position:absolute;left:0;top:368.8px;width:948px;height:29.98px;background:#f9fafd;border-top:1px solid #edf0f3;box-sizing:border-box"></div>
<div class="d" style="left:12px;top:369.4px;height:28.98px;line-height:28.98px;font-size:11.34px;transform:scaleX(0.93);">10.09.2024 03:11</div>
<div class="d" style="left:123.2px;top:369.4px;height:28.98px;line-height:28.98px;font-size:11.34px;transform:scaleX(0.93);">10.10.2024 01:30</div>
<div class="d sym" style="left:207.8px;top:369.4px;height:28.98px;line-height:28.98px;font-size:11.66px;transform:scaleX(0.93);"><span class="su">NZDCAD</span></div>
<div class="d lt" style="left:257.6px;top:369.4px;height:28.98px;line-height:28.98px;font-size:11.88px;transform:scaleX(0.93);">Buy</div>
<div class="d" style="left:293.5px;top:369.4px;height:28.98px;line-height:28.98px;font-size:11.34px;transform:scaleX(0.93);">0.04</div>
<div class="d" style="left:330px;top:369.4px;height:28.98px;line-height:28.98px;font-size:11.34px;transform:scaleX(0.93);">-</div>
<div class="d" style="left:378.4px;top:369.4px;height:28.98px;line-height:28.98px;font-size:11.34px;transform:scaleX(0.93);">0.83254</div>
<div class="d" style="left:439.1px;top:369.4px;height:28.98px;line-height:28.98px;font-size:11.34px;transform:scaleX(0.93);">0.83209</div>
<div class="d" style="left:505.8px;top:369.4px;height:28.98px;line-height:28.98px;font-size:11.34px;transform:scaleX(0.93);">0.8325</div>
<div class="d" style="left:557.3px;top:369.4px;height:28.98px;line-height:28.98px;font-size:11.34px;transform:scaleX(0.93);color:#47a947;-webkit-text-stroke:0.2px #47a947">4.1</div>
<div class="d" style="left:603.8px;top:369.4px;height:28.98px;line-height:28.98px;font-size:11.34px;transform:scaleX(0.93);color:#47a947;-webkit-text-stroke:0.2px #47a947">0.93</div>
<div class="d lt" style="left:662.3px;top:369.4px;height:28.98px;line-height:28.98px;font-size:11.88px;transform:scaleX(0.93);">22h 19m</div>
<div class="d" style="left:714px;top:369.4px;height:28.98px;line-height:28.98px;font-size:11.34px;transform:scaleX(0.93);color:#47a947;-webkit-text-stroke:0.2px #47a947">0.00%</div>
<div style="position:absolute;left:0;top:398.78px;width:948px;height:29.98px;background:#ffffff;border-top:1px solid #edf0f3;box-sizing:border-box"></div>
<div class="d" style="left:12px;top:399.38px;height:28.98px;line-height:28.98px;font-size:11.34px;transform:scaleX(0.93);">10.09.2024 01:10</div>
<div class="d" style="left:123.2px;top:399.38px;height:28.98px;line-height:28.98px;font-size:11.34px;transform:scaleX(0.93);">10.10.2024 01:30</div>
<div class="d sym" style="left:207.8px;top:399.38px;height:28.98px;line-height:28.98px;font-size:11.66px;transform:scaleX(0.93);"><span class="su">NZDCAD</span></div>
<div class="d lt" style="left:257.6px;top:399.38px;height:28.98px;line-height:28.98px;font-size:11.88px;transform:scaleX(0.93);">Buy</div>
<div class="d" style="left:293.5px;top:399.38px;height:28.98px;line-height:28.98px;font-size:11.34px;transform:scaleX(0.93);">0.04</div>
<div class="d" style="left:330px;top:399.38px;height:28.98px;line-height:28.98px;font-size:11.34px;transform:scaleX(0.93);">-</div>
<div class="d" style="left:378.4px;top:399.38px;height:28.98px;line-height:28.98px;font-size:11.34px;transform:scaleX(0.93);">0.83254</div>
<div class="d" style="left:439.1px;top:399.38px;height:28.98px;line-height:28.98px;font-size:11.34px;transform:scaleX(0.93);">0.83284</div>
<div class="d" style="left:505.8px;top:399.38px;height:28.98px;line-height:28.98px;font-size:11.34px;transform:scaleX(0.93);">0.8325</div>
<div class="d" style="left:557.3px;top:399.38px;height:28.98px;line-height:28.98px;font-size:11.34px;transform:scaleX(0.93);color:#e0504a;-webkit-text-stroke:0.2px #e0504a">-3.4</div>
<div class="d" style="left:603.8px;top:399.38px;height:28.98px;line-height:28.98px;font-size:11.34px;transform:scaleX(0.93);color:#e0504a;-webkit-text-stroke:0.2px #e0504a">-1.26</div>
<div class="d lt" style="left:662.3px;top:399.38px;height:28.98px;line-height:28.98px;font-size:11.88px;transform:scaleX(0.93);">1d</div>
<div class="d" style="left:714px;top:399.38px;height:28.98px;line-height:28.98px;font-size:11.34px;transform:scaleX(0.93);color:#47a947;-webkit-text-stroke:0.2px #47a947">0.00%</div>
<div style="position:absolute;left:0;top:428.76px;width:948px;height:29.98px;background:#f9fafd;border-top:1px solid #edf0f3;box-sizing:border-box"></div>
<div class="d" style="left:12px;top:429.36px;height:28.98px;line-height:28.98px;font-size:11.34px;transform:scaleX(0.93);">10.09.2024 01:05</div>
<div class="d" style="left:123.2px;top:429.36px;height:28.98px;line-height:28.98px;font-size:11.34px;transform:scaleX(0.93);">10.10.2024 01:30</div>
<div class="d sym" style="left:207.8px;top:429.36px;height:28.98px;line-height:28.98px;font-size:11.66px;transform:scaleX(0.93);"><span class="su">NZDCAD</span></div>
<div class="d lt" style="left:257.6px;top:429.36px;height:28.98px;line-height:28.98px;font-size:11.88px;transform:scaleX(0.93);">Buy</div>
<div class="d" style="left:293.5px;top:429.36px;height:28.98px;line-height:28.98px;font-size:11.34px;transform:scaleX(0.93);">0.03</div>
<div class="d" style="left:330px;top:429.36px;height:28.98px;line-height:28.98px;font-size:11.34px;transform:scaleX(0.93);">-</div>
<div class="d" style="left:378.4px;top:429.36px;height:28.98px;line-height:28.98px;font-size:11.34px;transform:scaleX(0.93);">0.83254</div>
<div class="d" style="left:439.1px;top:429.36px;height:28.98px;line-height:28.98px;font-size:11.34px;transform:scaleX(0.93);">0.83512</div>
<div class="d" style="left:505.8px;top:429.36px;height:28.98px;line-height:28.98px;font-size:11.34px;transform:scaleX(0.93);">0.8325</div>
<div class="d" style="left:557.3px;top:429.36px;height:28.98px;line-height:28.98px;font-size:11.34px;transform:scaleX(0.93);color:#e0504a;-webkit-text-stroke:0.2px #e0504a">-26.2</div>
<div class="d" style="left:603.8px;top:429.36px;height:28.98px;line-height:28.98px;font-size:11.34px;transform:scaleX(0.93);color:#e0504a;-webkit-text-stroke:0.2px #e0504a">-5.94</div>
<div class="d lt" style="left:662.3px;top:429.36px;height:28.98px;line-height:28.98px;font-size:11.88px;transform:scaleX(0.93);">1d</div>
<div class="d" style="left:714px;top:429.36px;height:28.98px;line-height:28.98px;font-size:11.34px;transform:scaleX(0.93);color:#e0504a;-webkit-text-stroke:0.2px #e0504a">-0.02%</div>
<div style="position:absolute;left:0;top:458.74px;width:948px;height:29.98px;background:#ffffff;border-top:1px solid #edf0f3;box-sizing:border-box"></div>
<div class="d" style="left:12px;top:459.34px;height:28.98px;line-height:28.98px;font-size:11.34px;transform:scaleX(0.93);">10.08.2024 21:50</div>
<div class="d" style="left:123.2px;top:459.34px;height:28.98px;line-height:28.98px;font-size:11.34px;transform:scaleX(0.93);">10.10.2024 01:30</div>
<div class="d sym" style="left:207.8px;top:459.34px;height:28.98px;line-height:28.98px;font-size:11.66px;transform:scaleX(0.93);"><span class="su">NZDCAD</span></div>
<div class="d lt" style="left:257.6px;top:459.34px;height:28.98px;line-height:28.98px;font-size:11.88px;transform:scaleX(0.93);">Buy</div>
<div class="d" style="left:293.5px;top:459.34px;height:28.98px;line-height:28.98px;font-size:11.34px;transform:scaleX(0.93);">0.03</div>
<div class="d" style="left:330px;top:459.34px;height:28.98px;line-height:28.98px;font-size:11.34px;transform:scaleX(0.93);">-</div>
<div class="d" style="left:378.4px;top:459.34px;height:28.98px;line-height:28.98px;font-size:11.34px;transform:scaleX(0.93);">0.83254</div>
<div class="d" style="left:439.1px;top:459.34px;height:28.98px;line-height:28.98px;font-size:11.34px;transform:scaleX(0.93);">0.83795</div>
<div class="d" style="left:505.8px;top:459.34px;height:28.98px;line-height:28.98px;font-size:11.34px;transform:scaleX(0.93);">0.8325</div>
<div class="d" style="left:557.3px;top:459.34px;height:28.98px;line-height:28.98px;font-size:11.34px;transform:scaleX(0.93);color:#e0504a;-webkit-text-stroke:0.2px #e0504a">-54.5</div>
<div class="d" style="left:603.8px;top:459.34px;height:28.98px;line-height:28.98px;font-size:11.34px;transform:scaleX(0.93);color:#e0504a;-webkit-text-stroke:0.2px #e0504a">-12.12</div>
<div class="d lt" style="left:662.3px;top:459.34px;height:28.98px;line-height:28.98px;font-size:11.88px;transform:scaleX(0.93);">1d</div>
<div class="d" style="left:714px;top:459.34px;height:28.98px;line-height:28.98px;font-size:11.34px;transform:scaleX(0.93);color:#e0504a;-webkit-text-stroke:0.2px #e0504a">-0.03%</div>
<div style="position:absolute;left:0;top:488.72px;width:948px;height:29.98px;background:#f9fafd;border-top:1px solid #edf0f3;box-sizing:border-box"></div>
<div style="position:absolute;left:421px;width:54px;top:489.52px;height:29.18px;background:#e3f9db"></div>
<div class="d" style="left:12px;top:489.32px;height:28.98px;line-height:28.98px;font-size:11.34px;transform:scaleX(0.93);">10.09.2024 06:21</div>
<div class="d" style="left:123.2px;top:489.32px;height:28.98px;line-height:28.98px;font-size:11.34px;transform:scaleX(0.93);">10.09.2024 20:50</div>
<div class="d sym" style="left:207.8px;top:489.32px;height:28.98px;line-height:28.98px;font-size:11.66px;transform:scaleX(0.93);"><span class="su">AUDCAD</span></div>
<div class="d lt" style="left:257.6px;top:489.32px;height:28.98px;line-height:28.98px;font-size:11.88px;transform:scaleX(0.93);">Buy</div>
<div class="d" style="left:293.5px;top:489.32px;height:28.98px;line-height:28.98px;font-size:11.34px;transform:scaleX(0.93);">0.03</div>
<div class="d" style="left:330px;top:489.32px;height:28.98px;line-height:28.98px;font-size:11.34px;transform:scaleX(0.93);">-</div>
<div class="d" style="left:378.4px;top:489.32px;height:28.98px;line-height:28.98px;font-size:11.34px;transform:scaleX(0.93);">0.92127</div>
<div class="d" style="left:439.1px;top:489.32px;height:28.98px;line-height:28.98px;font-size:11.34px;transform:scaleX(0.93);">0.92042</div>
<div class="d" style="left:505.8px;top:489.32px;height:28.98px;line-height:28.98px;font-size:11.34px;transform:scaleX(0.93);">0.92127</div>
<div class="d" style="left:557.3px;top:489.32px;height:28.98px;line-height:28.98px;font-size:11.34px;transform:scaleX(0.93);color:#47a947;-webkit-text-stroke:0.2px #47a947">8.5</div>
<div class="d" style="left:603.8px;top:489.32px;height:28.98px;line-height:28.98px;font-size:11.34px;transform:scaleX(0.93);color:#47a947;-webkit-text-stroke:0.2px #47a947">1.65</div>
<div class="d lt" style="left:662.3px;top:489.32px;height:28.98px;line-height:28.98px;font-size:11.88px;transform:scaleX(0.93);">14h 29m</div>
<div class="d" style="left:714px;top:489.32px;height:28.98px;line-height:28.98px;font-size:11.34px;transform:scaleX(0.93);color:#47a947;-webkit-text-stroke:0.2px #47a947">0.00%</div>
<div style="position:absolute;left:0;top:518.7px;width:948px;height:29.98px;background:#ffffff;border-top:1px solid #edf0f3;box-sizing:border-box"></div>
<div class="d" style="left:12px;top:519.3px;height:28.98px;line-height:28.98px;font-size:11.34px;transform:scaleX(0.93);">10.08.2024 14:51</div>
<div class="d" style="left:123.2px;top:519.3px;height:28.98px;line-height:28.98px;font-size:11.34px;transform:scaleX(0.93);">10.09.2024 08:08</div>
<div class="d sym" style="left:207.8px;top:519.3px;height:28.98px;line-height:28.98px;font-size:11.66px;transform:scaleX(0.93);"><span class="su">USDCHF</span></div>
<div class="d lt" style="left:257.6px;top:519.3px;height:28.98px;line-height:28.98px;font-size:11.88px;transform:scaleX(0.93);">Sell</div>
<div class="d" style="left:293.5px;top:519.3px;height:28.98px;line-height:28.98px;font-size:11.34px;transform:scaleX(0.93);">0.03</div>
<div class="d" style="left:330px;top:519.3px;height:28.98px;line-height:28.98px;font-size:11.34px;transform:scaleX(0.93);">-</div>
<div class="d" style="left:378.4px;top:519.3px;height:28.98px;line-height:28.98px;font-size:11.34px;transform:scaleX(0.93);">0.8567</div>
<div class="d" style="left:439.1px;top:519.3px;height:28.98px;line-height:28.98px;font-size:11.34px;transform:scaleX(0.93);">0.85755</div>
<div class="d" style="left:505.8px;top:519.3px;height:28.98px;line-height:28.98px;font-size:11.34px;transform:scaleX(0.93);">0.85674</div>
<div class="d" style="left:557.3px;top:519.3px;height:28.98px;line-height:28.98px;font-size:11.34px;transform:scaleX(0.93);color:#47a947;-webkit-text-stroke:0.2px #47a947">8.1</div>
<div class="d" style="left:603.8px;top:519.3px;height:28.98px;line-height:28.98px;font-size:11.34px;transform:scaleX(0.93);color:#47a947;-webkit-text-stroke:0.2px #47a947">2.25</div>
<div class="d lt" style="left:662.3px;top:519.3px;height:28.98px;line-height:28.98px;font-size:11.88px;transform:scaleX(0.93);">17h 17m</div>
<div class="d" style="left:714px;top:519.3px;height:28.98px;line-height:28.98px;font-size:11.34px;transform:scaleX(0.93);color:#47a947;-webkit-text-stroke:0.2px #47a947">0.01%</div>
<div style="position:absolute;left:0;top:548.68px;width:948px;height:29.98px;background:#f9fafd;border-top:1px solid #edf0f3;box-sizing:border-box"></div>
<div style="position:absolute;left:421px;width:54px;top:549.48px;height:29.18px;background:#e3f9db"></div>
<div class="d" style="left:12px;top:549.28px;height:28.98px;line-height:28.98px;font-size:11.34px;transform:scaleX(0.93);">10.08.2024 14:03</div>
<div class="d" style="left:123.2px;top:549.28px;height:28.98px;line-height:28.98px;font-size:11.34px;transform:scaleX(0.93);">10.09.2024 07:07</div>
<div class="d sym" style="left:207.8px;top:549.28px;height:28.98px;line-height:28.98px;font-size:11.66px;transform:scaleX(0.93);"><span class="su">EURCHF</span></div>
<div class="d lt" style="left:257.6px;top:549.28px;height:28.98px;line-height:28.98px;font-size:11.88px;transform:scaleX(0.93);">Sell</div>
<div class="d" style="left:293.5px;top:549.28px;height:28.98px;line-height:28.98px;font-size:11.34px;transform:scaleX(0.93);">0.03</div>
<div class="d" style="left:330px;top:549.28px;height:28.98px;line-height:28.98px;font-size:11.34px;transform:scaleX(0.93);">-</div>
<div class="d" style="left:378.4px;top:549.28px;height:28.98px;line-height:28.98px;font-size:11.34px;transform:scaleX(0.93);">0.93969</div>
<div class="d" style="left:439.1px;top:549.28px;height:28.98px;line-height:28.98px;font-size:11.34px;transform:scaleX(0.93);">0.94054</div>
<div class="d" style="left:505.8px;top:549.28px;height:28.98px;line-height:28.98px;font-size:11.34px;transform:scaleX(0.93);">0.93969</div>
<div class="d" style="left:557.3px;top:549.28px;height:28.98px;line-height:28.98px;font-size:11.34px;transform:scaleX(0.93);color:#47a947;-webkit-text-stroke:0.2px #47a947">8.5</div>
<div class="d" style="left:603.8px;top:549.28px;height:28.98px;line-height:28.98px;font-size:11.34px;transform:scaleX(0.93);color:#47a947;-webkit-text-stroke:0.2px #47a947">2.45</div>
<div class="d lt" style="left:662.3px;top:549.28px;height:28.98px;line-height:28.98px;font-size:11.88px;transform:scaleX(0.93);">17h 4m</div>
<div class="d" style="left:714px;top:549.28px;height:28.98px;line-height:28.98px;font-size:11.34px;transform:scaleX(0.93);color:#47a947;-webkit-text-stroke:0.2px #47a947">0.01%</div>
<div style="position:absolute;left:0;top:578.66px;width:948px;height:29.98px;background:#ffffff;border-top:1px solid #edf0f3;box-sizing:border-box"></div>
<div style="position:absolute;left:421px;width:54px;top:579.46px;height:29.18px;background:#e3f9db"></div>
<div class="d" style="left:12px;top:579.26px;height:28.98px;line-height:28.98px;font-size:11.34px;transform:scaleX(0.93);">10.09.2024 03:54</div>
<div class="d" style="left:123.2px;top:579.26px;height:28.98px;line-height:28.98px;font-size:11.34px;transform:scaleX(0.93);">10.09.2024 05:38</div>
<div class="d sym" style="left:207.8px;top:579.26px;height:28.98px;line-height:28.98px;font-size:11.66px;transform:scaleX(0.93);"><span class="su">NZDUSD</span></div>
<div class="d lt" style="left:257.6px;top:579.26px;height:28.98px;line-height:28.98px;font-size:11.88px;transform:scaleX(0.93);">Buy</div>
<div class="d" style="left:293.5px;top:579.26px;height:28.98px;line-height:28.98px;font-size:11.34px;transform:scaleX(0.93);">0.05</div>
<div class="d" style="left:330px;top:579.26px;height:28.98px;line-height:28.98px;font-size:11.34px;transform:scaleX(0.93);">-</div>
<div class="d" style="left:378.4px;top:579.26px;height:28.98px;line-height:28.98px;font-size:11.34px;transform:scaleX(0.93);">0.61078</div>
<div class="d" style="left:439.1px;top:579.26px;height:28.98px;line-height:28.98px;font-size:11.34px;transform:scaleX(0.93);">0.60788</div>
<div class="d" style="left:505.8px;top:579.26px;height:28.98px;line-height:28.98px;font-size:11.34px;transform:scaleX(0.93);">0.61078</div>
<div class="d" style="left:557.3px;top:579.26px;height:28.98px;line-height:28.98px;font-size:11.34px;transform:scaleX(0.93);color:#47a947;-webkit-text-stroke:0.2px #47a947">29.0</div>
<div class="d" style="left:603.8px;top:579.26px;height:28.98px;line-height:28.98px;font-size:11.34px;transform:scaleX(0.93);color:#47a947;-webkit-text-stroke:0.2px #47a947">14.15</div>
<div class="d lt" style="left:662.3px;top:579.26px;height:28.98px;line-height:28.98px;font-size:11.88px;transform:scaleX(0.93);">1h 44m</div>
<div class="d" style="left:714px;top:579.26px;height:28.98px;line-height:28.98px;font-size:11.34px;transform:scaleX(0.93);color:#47a947;-webkit-text-stroke:0.2px #47a947">0.04%</div>
<div style="position:absolute;left:0;top:608.64px;width:948px;height:29.98px;background:#f9fafd;border-top:1px solid #edf0f3;box-sizing:border-box"></div>
<div style="position:absolute;left:421px;width:54px;top:609.44px;height:29.18px;background:#e3f9db"></div>
<div class="d" style="left:12px;top:609.24px;height:28.98px;line-height:28.98px;font-size:11.34px;transform:scaleX(0.93);">10.09.2024 03:46</div>
<div class="d" style="left:123.2px;top:609.24px;height:28.98px;line-height:28.98px;font-size:11.34px;transform:scaleX(0.93);">10.09.2024 05:38</div>
<div class="d sym" style="left:207.8px;top:609.24px;height:28.98px;line-height:28.98px;font-size:11.66px;transform:scaleX(0.93);"><span class="su">NZDUSD</span></div>
<div class="d lt" style="left:257.6px;top:609.24px;height:28.98px;line-height:28.98px;font-size:11.88px;transform:scaleX(0.93);">Buy</div>
<div class="d" style="left:293.5px;top:609.24px;height:28.98px;line-height:28.98px;font-size:11.34px;transform:scaleX(0.93);">0.04</div>
<div class="d" style="left:330px;top:609.24px;height:28.98px;line-height:28.98px;font-size:11.34px;transform:scaleX(0.93);">-</div>
<div class="d" style="left:378.4px;top:609.24px;height:28.98px;line-height:28.98px;font-size:11.34px;transform:scaleX(0.93);">0.61078</div>
<div class="d" style="left:439.1px;top:609.24px;height:28.98px;line-height:28.98px;font-size:11.34px;transform:scaleX(0.93);">0.60882</div>
<div class="d" style="left:505.8px;top:609.24px;height:28.98px;line-height:28.98px;font-size:11.34px;transform:scaleX(0.93);">0.61078</div>
<div class="d" style="left:557.3px;top:609.24px;height:28.98px;line-height:28.98px;font-size:11.34px;transform:scaleX(0.93);color:#47a947;-webkit-text-stroke:0.2px #47a947">19.6</div>
<div class="d" style="left:603.8px;top:609.24px;height:28.98px;line-height:28.98px;font-size:11.34px;transform:scaleX(0.93);color:#47a947;-webkit-text-stroke:0.2px #47a947">7.56</div>
<div class="d lt" style="left:662.3px;top:609.24px;height:28.98px;line-height:28.98px;font-size:11.88px;transform:scaleX(0.93);">1h 52m</div>
<div class="d" style="left:714px;top:609.24px;height:28.98px;line-height:28.98px;font-size:11.34px;transform:scaleX(0.93);color:#47a947;-webkit-text-stroke:0.2px #47a947">0.02%</div>
<div style="position:absolute;left:0;top:638.62px;width:948px;height:29.98px;background:#ffffff;border-top:1px solid #edf0f3;box-sizing:border-box"></div>
<div style="position:absolute;left:421px;width:54px;top:639.42px;height:29.18px;background:#e3f9db"></div>
<div class="d" style="left:12px;top:639.22px;height:28.98px;line-height:28.98px;font-size:11.34px;transform:scaleX(0.93);">10.09.2024 03:05</div>
<div class="d" style="left:123.2px;top:639.22px;height:28.98px;line-height:28.98px;font-size:11.34px;transform:scaleX(0.93);">10.09.2024 05:38</div>
<div class="d sym" style="left:207.8px;top:639.22px;height:28.98px;line-height:28.98px;font-size:11.66px;transform:scaleX(0.93);"><span class="su">NZDUSD</span></div>
<div class="d lt" style="left:257.6px;top:639.22px;height:28.98px;line-height:28.98px;font-size:11.88px;transform:scaleX(0.93);">Buy</div>
<div class="d" style="left:293.5px;top:639.22px;height:28.98px;line-height:28.98px;font-size:11.34px;transform:scaleX(0.93);">0.04</div>
<div class="d" style="left:330px;top:639.22px;height:28.98px;line-height:28.98px;font-size:11.34px;transform:scaleX(0.93);">-</div>
<div class="d" style="left:378.4px;top:639.22px;height:28.98px;line-height:28.98px;font-size:11.34px;transform:scaleX(0.93);">0.61078</div>
<div class="d" style="left:439.1px;top:639.22px;height:28.98px;line-height:28.98px;font-size:11.34px;transform:scaleX(0.93);">0.60943</div>
<div class="d" style="left:505.8px;top:639.22px;height:28.98px;line-height:28.98px;font-size:11.34px;transform:scaleX(0.93);">0.61078</div>
<div class="d" style="left:557.3px;top:639.22px;height:28.98px;line-height:28.98px;font-size:11.34px;transform:scaleX(0.93);color:#47a947;-webkit-text-stroke:0.2px #47a947">13.5</div>
<div class="d" style="left:603.8px;top:639.22px;height:28.98px;line-height:28.98px;font-size:11.34px;transform:scaleX(0.93);color:#47a947;-webkit-text-stroke:0.2px #47a947">5.12</div>
<div class="d lt" style="left:662.3px;top:639.22px;height:28.98px;line-height:28.98px;font-size:11.88px;transform:scaleX(0.93);">2h 33m</div>
<div class="d" style="left:714px;top:639.22px;height:28.98px;line-height:28.98px;font-size:11.34px;transform:scaleX(0.93);color:#47a947;-webkit-text-stroke:0.2px #47a947">0.01%</div>
<svg style="position:absolute;left:0;top:0" width="948" height="707"><circle cx="12.8" cy="60.3" r="5.6" fill="#858585"/><rect x="12.05" y="59.7" width="1.5" height="3.2" fill="#fff"/><rect x="11.4" y="62.2" width="2.8" height="0.95" fill="#fff"/><rect x="11.5" y="59.7" width="0.8" height="0.7" fill="#fff"/><circle cx="12.8" cy="57.8" r="0.9" fill="#fff"/><circle cx="860.4" cy="60.3" r="5.6" fill="#858585"/><rect x="859.65" y="59.7" width="1.5" height="3.2" fill="#fff"/><rect x="859" y="62.2" width="2.8" height="0.95" fill="#fff"/><rect x="859.1" y="59.7" width="0.8" height="0.7" fill="#fff"/><circle cx="860.4" cy="57.8" r="0.9" fill="#fff"/><circle cx="930.7" cy="60.3" r="5.6" fill="#858585"/><rect x="929.95" y="59.7" width="1.5" height="3.2" fill="#fff"/><rect x="929.3" y="62.2" width="2.8" height="0.95" fill="#fff"/><rect x="929.4" y="59.7" width="0.8" height="0.7" fill="#fff"/><circle cx="930.7" cy="57.8" r="0.9" fill="#fff"/><g transform="translate(7,77.4)"><path d="M0 1.5 Q0 0 1.5 0 L6 0 L12 6 L6 12 L0 6 Z" fill="#c4c4c4"/><circle cx="2.7" cy="2.7" r="1.25" fill="#fff"/></g><polygon points="822.2,96.2 822.2,85.6 829.88,91.9 837.56,80.8 845.24,93.5 852.92,82.1 860.6,78.2 868.28,95.4 875.96,91.9 883.64,81.6 891.32,82.1 899,72.9 899,96.2" fill="#d3dcf8"/><polyline points="822.2,85.6 829.88,91.9 837.56,80.8 845.24,93.5 852.92,82.1 860.6,78.2 868.28,95.4 875.96,91.9 883.64,81.6 891.32,82.1 899,72.9" fill="none" stroke="#7585f2" stroke-width="1.4" stroke-linejoin="round"/><circle cx="899" cy="72.9" r="1.4" fill="#3fb21f"/><circle cx="868.28" cy="95.4" r="1.4" fill="#e3211b"/><ellipse cx="930.7" cy="83.6" rx="5.5" ry="4.3" fill="#a8a8a8"/><path d="M926.7 85.6 L925.6 88.7 L929.7 87.4 Z" fill="#a8a8a8"/><g transform="translate(7,107.38)"><path d="M0 1.5 Q0 0 1.5 0 L6 0 L12 6 L6 12 L0 6 Z" fill="#c4c4c4"/><circle cx="2.7" cy="2.7" r="1.25" fill="#fff"/></g><polygon points="822.2,126.18 822.2,111.98 828.6,125.08 835,117.68 841.4,120.38 847.8,115.18 854.2,119.08 860.6,120.38 867,113.78 873.4,108.58 879.8,113.78 886.2,107.28 892.6,103.28 899,104.08 899,126.18" fill="#d3dcf8"/><polyline points="822.2,111.98 828.6,125.08 835,117.68 841.4,120.38 847.8,115.18 854.2,119.08 860.6,120.38 867,113.78 873.4,108.58 879.8,113.78 886.2,107.28 892.6,103.28 899,104.08" fill="none" stroke="#7585f2" stroke-width="1.4" stroke-linejoin="round"/><circle cx="892.6" cy="103.28" r="1.4" fill="#3fb21f"/><circle cx="828.6" cy="125.08" r="1.4" fill="#e3211b"/><circle cx="899" cy="104.08" r="1.4" fill="#f29a2e"/><ellipse cx="930.7" cy="113.58" rx="5.5" ry="4.3" fill="#a8a8a8"/><path d="M926.7 115.58 L925.6 118.68 L929.7 117.38 Z" fill="#a8a8a8"/><g transform="translate(7,137.36)"><path d="M0 1.5 Q0 0 1.5 0 L6 0 L12 6 L6 12 L0 6 Z" fill="#c4c4c4"/><circle cx="2.7" cy="2.7" r="1.25" fill="#fff"/></g><polygon points="822.2,156.16 822.2,154.16 829.18,154.76 836.16,155.46 843.15,154.16 850.13,154.16 857.11,150.76 864.09,151.56 871.07,150.76 878.05,148.06 885.04,143.66 892.02,136.16 899,133.46 899,156.16" fill="#d3dcf8"/><polyline points="822.2,154.16 829.18,154.76 836.16,155.46 843.15,154.16 850.13,154.16 857.11,150.76 864.09,151.56 871.07,150.76 878.05,148.06 885.04,143.66 892.02,136.16 899,133.46" fill="none" stroke="#7585f2" stroke-width="1.4" stroke-linejoin="round"/><circle cx="899" cy="133.46" r="1.4" fill="#3fb21f"/><circle cx="836.16" cy="155.46" r="1.4" fill="#e3211b"/><ellipse cx="930.7" cy="143.56" rx="5.5" ry="4.3" fill="#a8a8a8"/><path d="M926.7 145.56 L925.6 148.66 L929.7 147.36 Z" fill="#a8a8a8"/><g transform="translate(7,167.34)"><path d="M0 1.5 Q0 0 1.5 0 L6 0 L12 6 L6 12 L0 6 Z" fill="#c4c4c4"/><circle cx="2.7" cy="2.7" r="1.25" fill="#fff"/></g><polygon points="822.2,186.14 822.2,179.74 829.18,175.24 836.16,184.94 843.15,178.44 850.13,184.14 857.11,185.74 864.09,179.74 871.07,183.24 878.05,173.14 885.04,177.84 892.02,163.14 899,166.64 899,186.14" fill="#d3dcf8"/><polyline points="822.2,179.74 829.18,175.24 836.16,184.94 843.15,178.44 850.13,184.14 857.11,185.74 864.09,179.74 871.07,183.24 878.05,173.14 885.04,177.84 892.02,163.14 899,166.64" fill="none" stroke="#7585f2" stroke-width="1.4" stroke-linejoin="round"/><circle cx="892.02" cy="163.14" r="1.4" fill="#3fb21f"/><circle cx="836.16" cy="184.94" r="1.4" fill="#e3211b"/><circle cx="899" cy="166.64" r="1.4" fill="#f29a2e"/><ellipse cx="930.7" cy="173.54" rx="5.5" ry="4.3" fill="#a8a8a8"/><path d="M926.7 175.54 L925.6 178.64 L929.7 177.34 Z" fill="#a8a8a8"/><g transform="translate(7,197.32)"><path d="M0 1.5 Q0 0 1.5 0 L6 0 L12 6 L6 12 L0 6 Z" fill="#c4c4c4"/><circle cx="2.7" cy="2.7" r="1.25" fill="#fff"/></g><polygon points="822.2,216.12 822.2,202.62 828.11,202.22 834.02,214.82 839.92,214.02 845.83,206.92 851.74,214.82 857.65,210.52 863.55,213.22 869.46,206.92 875.37,207.82 881.28,196.82 887.18,199.02 893.09,192.92 899,196.82 899,216.12" fill="#d3dcf8"/><polyline points="822.2,202.62 828.11,202.22 834.02,214.82 839.92,214.02 845.83,206.92 851.74,214.82 857.65,210.52 863.55,213.22 869.46,206.92 875.37,207.82 881.28,196.82 887.18,199.02 893.09,192.92 899,196.82" fill="none" stroke="#7585f2" stroke-width="1.4" stroke-linejoin="round"/><circle cx="893.09" cy="192.92" r="1.4" fill="#3fb21f"/><circle cx="834.02" cy="214.82" r="1.4" fill="#e3211b"/><circle cx="899" cy="196.82" r="1.4" fill="#f29a2e"/><ellipse cx="930.7" cy="203.52" rx="5.5" ry="4.3" fill="#a8a8a8"/><path d="M926.7 205.52 L925.6 208.62 L929.7 207.32 Z" fill="#a8a8a8"/><g transform="translate(7,227.3)"><path d="M0 1.5 Q0 0 1.5 0 L6 0 L12 6 L6 12 L0 6 Z" fill="#c4c4c4"/><circle cx="2.7" cy="2.7" r="1.25" fill="#fff"/></g><polygon points="822.2,246.1 822.2,223.7 828.6,222.9 835,232.6 841.4,231 847.8,243.2 854.2,245.2 860.6,239.4 867,245.7 873.4,240.7 879.8,241.9 886.2,230.5 892.6,226.7 899,229.6 899,246.1" fill="#d3dcf8"/><polyline points="822.2,223.7 828.6,222.9 835,232.6 841.4,231 847.8,243.2 854.2,245.2 860.6,239.4 867,245.7 873.4,240.7 879.8,241.9 886.2,230.5 892.6,226.7 899,229.6" fill="none" stroke="#7585f2" stroke-width="1.4" stroke-linejoin="round"/><circle cx="828.6" cy="222.9" r="1.4" fill="#3fb21f"/><circle cx="854.2" cy="245.2" r="1.4" fill="#e3211b"/><circle cx="899" cy="229.6" r="1.4" fill="#f29a2e"/><ellipse cx="930.7" cy="233.5" rx="5.5" ry="4.3" fill="#a8a8a8"/><path d="M926.7 235.5 L925.6 238.6 L929.7 237.3 Z" fill="#a8a8a8"/><g transform="translate(7,257.28)"><path d="M0 1.5 Q0 0 1.5 0 L6 0 L12 6 L6 12 L0 6 Z" fill="#c4c4c4"/><circle cx="2.7" cy="2.7" r="1.25" fill="#fff"/></g><polygon points="822.2,276.08 822.2,273.08 828.6,268.48 835,275.28 841.4,269.78 847.8,273.98 854.2,272.28 860.6,265.48 867,271.48 873.4,260.38 879.8,262.18 886.2,254.58 892.6,253.28 899,253.28 899,276.08" fill="#d3dcf8"/><polyline points="822.2,273.08 828.6,268.48 835,275.28 841.4,269.78 847.8,273.98 854.2,272.28 860.6,265.48 867,271.48 873.4,260.38 879.8,262.18 886.2,254.58 892.6,253.28 899,253.28" fill="none" stroke="#7585f2" stroke-width="1.4" stroke-linejoin="round"/><circle cx="892.6" cy="253.28" r="1.4" fill="#3fb21f"/><circle cx="835" cy="275.28" r="1.4" fill="#e3211b"/><circle cx="899" cy="253.28" r="1.4" fill="#f29a2e"/><ellipse cx="930.7" cy="263.48" rx="5.5" ry="4.3" fill="#a8a8a8"/><path d="M926.7 265.48 L925.6 268.58 L929.7 267.28 Z" fill="#a8a8a8"/><g transform="translate(7,287.26)"><path d="M0 1.5 Q0 0 1.5 0 L6 0 L12 6 L6 12 L0 6 Z" fill="#c4c4c4"/><circle cx="2.7" cy="2.7" r="1.25" fill="#fff"/></g><polygon points="822.2,306.06 822.2,301.36 829.18,297.56 836.16,304.66 843.15,297.56 850.13,303.46 857.11,303.46 864.09,295.86 871.07,301.36 878.05,289.96 885.04,291.26 892.02,283.16 899,283.16 899,306.06" fill="#d3dcf8"/><polyline points="822.2,301.36 829.18,297.56 836.16,304.66 843.15,297.56 850.13,303.46 857.11,303.46 864.09,295.86 871.07,301.36 878.05,289.96 885.04,291.26 892.02,283.16 899,283.16" fill="none" stroke="#7585f2" stroke-width="1.4" stroke-linejoin="round"/><circle cx="892.02" cy="283.16" r="1.4" fill="#3fb21f"/><circle cx="836.16" cy="304.66" r="1.4" fill="#e3211b"/><circle cx="899" cy="283.16" r="1.4" fill="#f29a2e"/><ellipse cx="930.7" cy="293.46" rx="5.5" ry="4.3" fill="#a8a8a8"/><path d="M926.7 295.46 L925.6 298.56 L929.7 297.26 Z" fill="#a8a8a8"/><g transform="translate(7,317.24)"><path d="M0 1.5 Q0 0 1.5 0 L6 0 L12 6 L6 12 L0 6 Z" fill="#c4c4c4"/><circle cx="2.7" cy="2.7" r="1.25" fill="#fff"/></g><polygon points="822.2,336.04 822.2,326.24 829.18,325.44 836.16,333.04 843.15,335.54 850.13,328.74 857.11,333.04 864.09,325.44 871.07,331.74 878.05,319.54 885.04,322.94 892.02,313.54 899,313.54 899,336.04" fill="#d3dcf8"/><polyline points="822.2,326.24 829.18,325.44 836.16,333.04 843.15,335.54 850.13,328.74 857.11,333.04 864.09,325.44 871.07,331.74 878.05,319.54 885.04,322.94 892.02,313.54 899,313.54" fill="none" stroke="#7585f2" stroke-width="1.4" stroke-linejoin="round"/><circle cx="892.02" cy="313.54" r="1.4" fill="#3fb21f"/><circle cx="843.15" cy="335.54" r="1.4" fill="#e3211b"/><circle cx="899" cy="313.54" r="1.4" fill="#f29a2e"/><ellipse cx="930.7" cy="323.44" rx="5.5" ry="4.3" fill="#a8a8a8"/><path d="M926.7 325.44 L925.6 328.54 L929.7 327.24 Z" fill="#a8a8a8"/><g transform="translate(7,347.22)"><path d="M0 1.5 Q0 0 1.5 0 L6 0 L12 6 L6 12 L0 6 Z" fill="#c4c4c4"/><circle cx="2.7" cy="2.7" r="1.25" fill="#fff"/></g><polygon points="822.2,366.02 822.2,357.02 829.18,343.12 836.16,350.72 843.15,357.52 850.13,357.52 857.11,365.12 864.09,362.12 871.07,354.52 878.05,363.42 885.04,349.02 892.02,346.92 899,347.42 899,366.02" fill="#d3dcf8"/><polyline points="822.2,357.02 829.18,343.12 836.16,350.72 843.15,357.52 850.13,357.52 857.11,365.12 864.09,362.12 871.07,354.52 878.05,363.42 885.04,349.02 892.02,346.92 899,347.42" fill="none" stroke="#7585f2" stroke-width="1.4" stroke-linejoin="round"/><circle cx="829.18" cy="343.12" r="1.4" fill="#3fb21f"/><circle cx="857.11" cy="365.12" r="1.4" fill="#e3211b"/><circle cx="899" cy="347.42" r="1.4" fill="#f29a2e"/><ellipse cx="930.7" cy="353.42" rx="5.5" ry="4.3" fill="#a8a8a8"/><path d="M926.7 355.42 L925.6 358.52 L929.7 357.22 Z" fill="#a8a8a8"/><g transform="translate(7,377.2)"><path d="M0 1.5 Q0 0 1.5 0 L6 0 L12 6 L6 12 L0 6 Z" fill="#c4c4c4"/><circle cx="2.7" cy="2.7" r="1.25" fill="#fff"/></g><polygon points="822.2,396 822.2,379.4 828.6,372.7 835,384.9 841.4,379.4 847.8,387.9 854.2,387.4 860.6,395 867,391.2 873.4,384.4 879.8,392 886.2,377.8 892.6,377.8 899,377.3 899,396" fill="#d3dcf8"/><polyline points="822.2,379.4 828.6,372.7 835,384.9 841.4,379.4 847.8,387.9 854.2,387.4 860.6,395 867,391.2 873.4,384.4 879.8,392 886.2,377.8 892.6,377.8 899,377.3" fill="none" stroke="#7585f2" stroke-width="1.4" stroke-linejoin="round"/><circle cx="828.6" cy="372.7" r="1.4" fill="#3fb21f"/><circle cx="860.6" cy="395" r="1.4" fill="#e3211b"/><circle cx="899" cy="377.3" r="1.4" fill="#f29a2e"/><ellipse cx="930.7" cy="383.4" rx="5.5" ry="4.3" fill="#a8a8a8"/><path d="M926.7 385.4 L925.6 388.5 L929.7 387.2 Z" fill="#a8a8a8"/><g transform="translate(7,407.18)"><path d="M0 1.5 Q0 0 1.5 0 L6 0 L12 6 L6 12 L0 6 Z" fill="#c4c4c4"/><circle cx="2.7" cy="2.7" r="1.25" fill="#fff"/></g><polygon points="822.2,425.98 822.2,409.78 828.6,403.78 835,417.38 841.4,411.38 847.8,418.88 854.2,417.38 860.6,425.78 867,423.98 873.4,418.88 879.8,423.98 886.2,411.78 892.6,411.38 899,411.38 899,425.98" fill="#d3dcf8"/><polyline points="822.2,409.78 828.6,403.78 835,417.38 841.4,411.38 847.8,418.88 854.2,417.38 860.6,425.78 867,423.98 873.4,418.88 879.8,423.98 886.2,411.78 892.6,411.38 899,411.38" fill="none" stroke="#7585f2" stroke-width="1.4" stroke-linejoin="round"/><circle cx="828.6" cy="403.78" r="1.4" fill="#3fb21f"/><circle cx="860.6" cy="425.78" r="1.4" fill="#e3211b"/><circle cx="899" cy="411.38" r="1.4" fill="#f29a2e"/><ellipse cx="930.7" cy="413.38" rx="5.5" ry="4.3" fill="#a8a8a8"/><path d="M926.7 415.38 L925.6 418.48 L929.7 417.18 Z" fill="#a8a8a8"/><g transform="translate(7,437.16)"><path d="M0 1.5 Q0 0 1.5 0 L6 0 L12 6 L6 12 L0 6 Z" fill="#c4c4c4"/><circle cx="2.7" cy="2.7" r="1.25" fill="#fff"/></g><polygon points="822.2,455.96 822.2,433.36 829.18,447.76 836.16,440.96 843.15,447.76 850.13,446.76 857.11,454.86 864.09,453.56 871.07,449.26 878.05,453.56 885.04,442.66 892.02,442.16 899,441.76 899,455.96" fill="#d3dcf8"/><polyline points="822.2,433.36 829.18,447.76 836.16,440.96 843.15,447.76 850.13,446.76 857.11,454.86 864.09,453.56 871.07,449.26 878.05,453.56 885.04,442.66 892.02,442.16 899,441.76" fill="none" stroke="#7585f2" stroke-width="1.4" stroke-linejoin="round"/><circle cx="822.2" cy="433.36" r="1.4" fill="#3fb21f"/><circle cx="857.11" cy="454.86" r="1.4" fill="#e3211b"/><circle cx="899" cy="441.76" r="1.4" fill="#f29a2e"/><ellipse cx="930.7" cy="443.36" rx="5.5" ry="4.3" fill="#a8a8a8"/><path d="M926.7 445.36 L925.6 448.46 L929.7 447.16 Z" fill="#a8a8a8"/><g transform="translate(7,467.14)"><path d="M0 1.5 Q0 0 1.5 0 L6 0 L12 6 L6 12 L0 6 Z" fill="#c4c4c4"/><circle cx="2.7" cy="2.7" r="1.25" fill="#fff"/></g><polygon points="822.2,485.94 822.2,462.94 829.18,476.34 836.16,474.64 843.15,480.14 850.13,477.14 857.11,484.74 864.09,484.74 871.07,480.64 878.05,483.94 885.04,476.34 892.02,476.34 899,476.34 899,485.94" fill="#d3dcf8"/><polyline points="822.2,462.94 829.18,476.34 836.16,474.64 843.15,480.14 850.13,477.14 857.11,484.74 864.09,484.74 871.07,480.64 878.05,483.94 885.04,476.34 892.02,476.34 899,476.34" fill="none" stroke="#7585f2" stroke-width="1.4" stroke-linejoin="round"/><circle cx="822.2" cy="462.94" r="1.4" fill="#3fb21f"/><circle cx="864.09" cy="484.74" r="1.4" fill="#e3211b"/><circle cx="899" cy="476.34" r="1.4" fill="#f29a2e"/><ellipse cx="930.7" cy="473.34" rx="5.5" ry="4.3" fill="#a8a8a8"/><path d="M926.7 475.34 L925.6 478.44 L929.7 477.14 Z" fill="#a8a8a8"/><g transform="translate(7,497.12)"><path d="M0 1.5 Q0 0 1.5 0 L6 0 L12 6 L6 12 L0 6 Z" fill="#c4c4c4"/><circle cx="2.7" cy="2.7" r="1.25" fill="#fff"/></g><polygon points="822.2,515.92 822.2,499.92 828.6,499.92 835,509.22 841.4,496.62 847.8,501.72 854.2,502.42 860.6,515.12 867,510.52 873.4,500.42 879.8,506.72 886.2,498.32 892.6,497.92 899,493.32 899,515.92" fill="#d3dcf8"/><polyline points="822.2,499.92 828.6,499.92 835,509.22 841.4,496.62 847.8,501.72 854.2,502.42 860.6,515.12 867,510.52 873.4,500.42 879.8,506.72 886.2,498.32 892.6,497.92 899,493.32" fill="none" stroke="#7585f2" stroke-width="1.4" stroke-linejoin="round"/><circle cx="899" cy="493.32" r="1.4" fill="#3fb21f"/><circle cx="860.6" cy="515.12" r="1.4" fill="#e3211b"/><ellipse cx="930.7" cy="503.32" rx="5.5" ry="4.3" fill="#a8a8a8"/><path d="M926.7 505.32 L925.6 508.42 L929.7 507.12 Z" fill="#a8a8a8"/><g transform="translate(7,527.1)"><path d="M0 1.5 Q0 0 1.5 0 L6 0 L12 6 L6 12 L0 6 Z" fill="#c4c4c4"/><circle cx="2.7" cy="2.7" r="1.25" fill="#fff"/></g><polygon points="822.2,545.9 822.2,532.8 828.6,523.7 835,540.4 841.4,526.2 847.8,544.7 854.2,540.9 860.6,528.3 867,538.8 873.4,525.7 879.8,525.7 886.2,540.9 892.6,545.5 899,543.4 899,545.9" fill="#e8d9d9"/><polyline points="822.2,532.8 828.6,523.7 835,540.4 841.4,526.2 847.8,544.7 854.2,540.9 860.6,528.3 867,538.8 873.4,525.7 879.8,525.7 886.2,540.9 892.6,545.5 899,543.4" fill="none" stroke="#d98a8a" stroke-width="1.4" stroke-linejoin="round"/><circle cx="828.6" cy="523.7" r="1.4" fill="#3fb21f"/><circle cx="847.8" cy="544.7" r="1.4" fill="#e3211b"/><circle cx="899" cy="543.4" r="1.4" fill="#f29a2e"/><ellipse cx="930.7" cy="533.3" rx="5.5" ry="4.3" fill="#a8a8a8"/><path d="M926.7 535.3 L925.6 538.4 L929.7 537.1 Z" fill="#a8a8a8"/><g transform="translate(7,557.08)"><path d="M0 1.5 Q0 0 1.5 0 L6 0 L12 6 L6 12 L0 6 Z" fill="#c4c4c4"/><circle cx="2.7" cy="2.7" r="1.25" fill="#fff"/></g><polygon points="822.2,575.88 822.2,566.68 828.11,571.28 834.02,560.68 839.92,563.18 845.83,553.08 851.74,563.18 857.65,558.18 863.55,564.18 869.46,569.18 875.37,558.18 881.28,568.08 887.18,570.78 893.09,575.08 899,573.28 899,575.88" fill="#e8d9d9"/><polyline points="822.2,566.68 828.11,571.28 834.02,560.68 839.92,563.18 845.83,553.08 851.74,563.18 857.65,558.18 863.55,564.18 869.46,569.18 875.37,558.18 881.28,568.08 887.18,570.78 893.09,575.08 899,573.28" fill="none" stroke="#d98a8a" stroke-width="1.4" stroke-linejoin="round"/><circle cx="845.83" cy="553.08" r="1.4" fill="#3fb21f"/><circle cx="893.09" cy="575.08" r="1.4" fill="#e3211b"/><circle cx="899" cy="573.28" r="1.4" fill="#f29a2e"/><ellipse cx="930.7" cy="563.28" rx="5.5" ry="4.3" fill="#a8a8a8"/><path d="M926.7 565.28 L925.6 568.38 L929.7 567.08 Z" fill="#a8a8a8"/><g transform="translate(7,587.06)"><path d="M0 1.5 Q0 0 1.5 0 L6 0 L12 6 L6 12 L0 6 Z" fill="#c4c4c4"/><circle cx="2.7" cy="2.7" r="1.25" fill="#fff"/></g><polygon points="822.2,605.86 822.2,605.16 829.88,593.46 837.56,598.56 845.24,601.36 852.92,599.86 860.6,603.06 868.28,586.36 875.96,593.46 883.64,592.46 891.32,586.96 899,582.96 899,605.86" fill="#d3dcf8"/><polyline points="822.2,605.16 829.88,593.46 837.56,598.56 845.24,601.36 852.92,599.86 860.6,603.06 868.28,586.36 875.96,593.46 883.64,592.46 891.32,586.96 899,582.96" fill="none" stroke="#7585f2" stroke-width="1.4" stroke-linejoin="round"/><circle cx="899" cy="582.96" r="1.4" fill="#3fb21f"/><circle cx="822.2" cy="605.16" r="1.4" fill="#e3211b"/><ellipse cx="930.7" cy="593.26" rx="5.5" ry="4.3" fill="#a8a8a8"/><path d="M926.7 595.26 L925.6 598.36 L929.7 597.06 Z" fill="#a8a8a8"/><g transform="translate(7,617.04)"><path d="M0 1.5 Q0 0 1.5 0 L6 0 L12 6 L6 12 L0 6 Z" fill="#c4c4c4"/><circle cx="2.7" cy="2.7" r="1.25" fill="#fff"/></g><polygon points="822.2,635.84 822.2,629.94 829.18,633.44 836.16,624.44 843.15,627.24 850.13,630.64 857.11,634.84 864.09,633.14 871.07,615.64 878.05,618.44 885.04,622.54 892.02,617.84 899,612.74 899,635.84" fill="#d3dcf8"/><polyline points="822.2,629.94 829.18,633.44 836.16,624.44 843.15,627.24 850.13,630.64 857.11,634.84 864.09,633.14 871.07,615.64 878.05,618.44 885.04,622.54 892.02,617.84 899,612.74" fill="none" stroke="#7585f2" stroke-width="1.4" stroke-linejoin="round"/><circle cx="899" cy="612.74" r="1.4" fill="#3fb21f"/><circle cx="857.11" cy="634.84" r="1.4" fill="#e3211b"/><ellipse cx="930.7" cy="623.24" rx="5.5" ry="4.3" fill="#a8a8a8"/><path d="M926.7 625.24 L925.6 628.34 L929.7 627.04 Z" fill="#a8a8a8"/><g transform="translate(7,647.02)"><path d="M0 1.5 Q0 0 1.5 0 L6 0 L12 6 L6 12 L0 6 Z" fill="#c4c4c4"/><circle cx="2.7" cy="2.7" r="1.25" fill="#fff"/></g><polygon points="822.2,665.82 822.2,654.22 829.88,659.72 837.56,665.42 845.24,654.22 852.92,656.42 860.6,662.92 868.28,664.62 875.96,645.62 883.64,653.52 891.32,647.82 899,642.52 899,665.82" fill="#d3dcf8"/><polyline points="822.2,654.22 829.88,659.72 837.56,665.42 845.24,654.22 852.92,656.42 860.6,662.92 868.28,664.62 875.96,645.62 883.64,653.52 891.32,647.82 899,642.52" fill="none" stroke="#7585f2" stroke-width="1.4" stroke-linejoin="round"/><circle cx="899" cy="642.52" r="1.4" fill="#3fb21f"/><circle cx="868.28" cy="664.62" r="1.4" fill="#e3211b"/><ellipse cx="930.7" cy="653.22" rx="5.5" ry="4.3" fill="#a8a8a8"/><path d="M926.7 655.22 L925.6 658.32 L929.7 657.02 Z" fill="#a8a8a8"/></svg>
<div class="pg" style="left:735.2px;width:19px"><svg width="6" height="8" style="vertical-align:-0.5px"><path d="M4.6 0.9 L1.9 4 L4.6 7.1" stroke="#4a4a4a" stroke-width="1.9" fill="none"/></svg></div>
<div class="pg" style="left:758.3px;width:17px">1</div>
<div class="pg act" style="left:779.4px;width:17.2px">2</div>
<div class="pg" style="left:800px;width:17.7px">3</div>
<div class="pg" style="left:821.3px;width:17.2px">4</div>
<div class="pg" style="left:842.4px;width:16.8px">5</div>
<div class="pg dis" style="left:863.5px;width:16.7px">..</div>
<div class="pg" style="left:884.8px;width:30.5px">210</div>
<div class="pg" style="left:919.2px;width:19.5px"><svg width="6" height="8" style="vertical-align:-0.5px"><path d="M1.4 0.9 L4.4 4 L1.4 7.1" stroke="#4a4a4a" stroke-width="1.9" fill="none"/></svg></div>
</div>
</div>
</div>
</body></html>
